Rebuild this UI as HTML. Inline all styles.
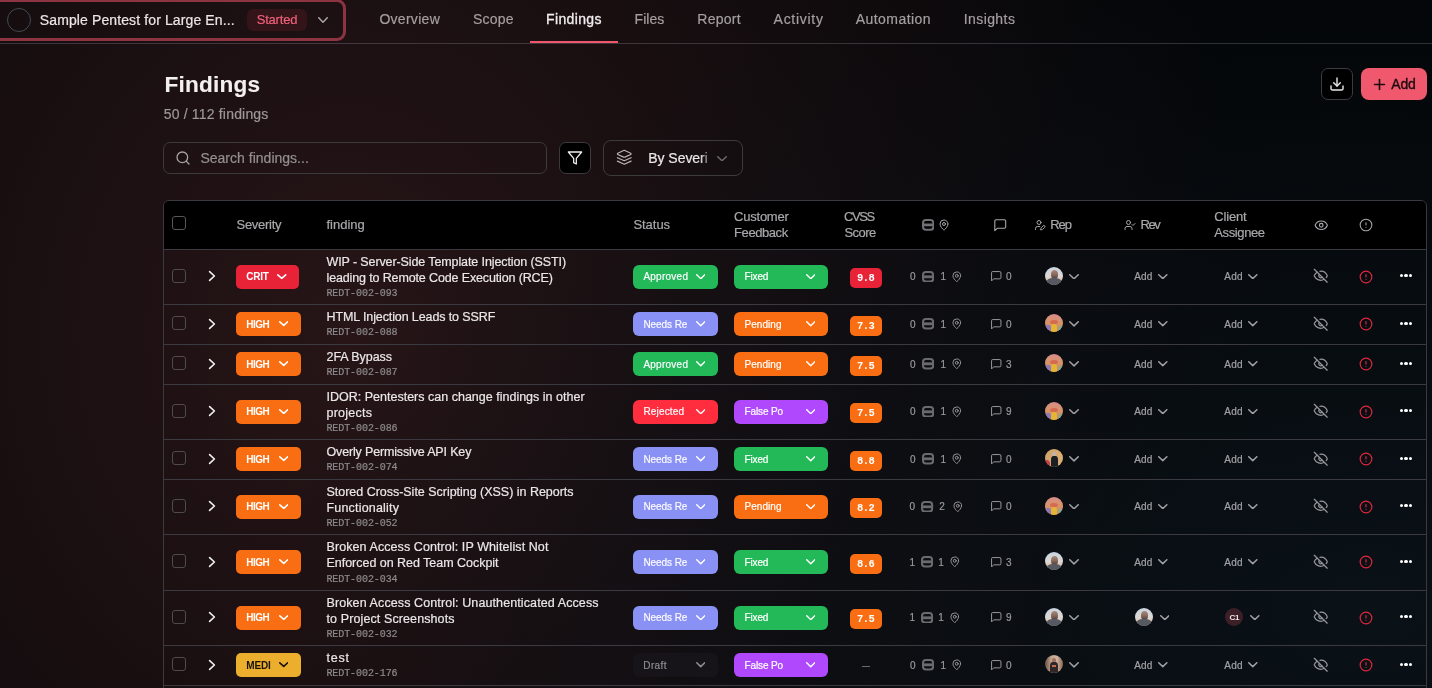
<!DOCTYPE html>
<html><head><meta charset="utf-8"><title>Findings</title>
<style>
html,body{margin:0;padding:0;}
body{width:1432px;height:688px;overflow:hidden;position:relative;font-family:'Liberation Sans', sans-serif;
background:
 radial-gradient(1092px 699px at 1368px 610px, rgba(10,17,23,1), rgba(10,17,23,0)),
 radial-gradient(898px 1027px at 347px 335px, rgba(39,21,23,1), rgba(39,21,23,0)),
 #030507;
}
#root{position:absolute;left:0;top:0;width:1432px;height:688px;will-change:transform;}
</style></head><body><div id="root">
<div style="position:absolute;left:-12px;top:-1px;width:358px;height:42px;box-sizing:border-box;border:3px solid #8c3442;border-radius:9px;"></div>
<div style="position:absolute;left:7px;top:8px;width:24px;height:24px;box-sizing:border-box;border:1.3px solid #444a51;border-radius:50%;"></div>
<div style="position:absolute;left:39.8px;top:13.23px;font-family:'Liberation Sans', sans-serif;font-size:14px;line-height:15.64px;color:#ece6e8;font-weight:400;letter-spacing:0.114px;white-space:nowrap;-webkit-text-stroke:0.2px currentColor;">Sample Pentest for Large En...</div>
<div style="position:absolute;left:247px;top:9px;width:60px;height:22px;box-sizing:border-box;background:#321419;border-radius:6px;"></div>
<div style="position:absolute;left:256.7px;top:13.13px;font-family:'Liberation Sans', sans-serif;font-size:13px;line-height:14.52px;color:#f0607a;font-weight:400;letter-spacing:-0.2px;white-space:nowrap;-webkit-text-stroke:0.2px currentColor;">Started</div>
<svg style="position:absolute;left:318px;top:17px" width="10" height="6" viewBox="0 0 10 6" fill="none" stroke="#a9a3a5" stroke-width="1.5" stroke-linecap="round" stroke-linejoin="round"><path d="M0.75 0.75 L5.0 5.25 L9.25 0.75"/></svg>
<div style="position:absolute;left:0px;top:43px;width:1432px;height:1px;box-sizing:border-box;background:rgba(235,235,255,0.185);"></div>
<div style="position:absolute;left:379.4px;top:12.23px;font-family:'Liberation Sans', sans-serif;font-size:14px;line-height:15.64px;color:#a59fa1;font-weight:400;letter-spacing:0.286px;white-space:nowrap;-webkit-text-stroke:0.2px currentColor;">Overview</div>
<div style="position:absolute;left:473px;top:12.23px;font-family:'Liberation Sans', sans-serif;font-size:14px;line-height:15.64px;color:#a59fa1;font-weight:400;letter-spacing:0.188px;white-space:nowrap;-webkit-text-stroke:0.2px currentColor;">Scope</div>
<div style="position:absolute;left:546px;top:12.23px;font-family:'Liberation Sans', sans-serif;font-size:14px;line-height:15.64px;color:#f2eef0;font-weight:400;letter-spacing:0.357px;white-space:nowrap;-webkit-text-stroke:0.3px #f2eef0;">Findings</div>
<div style="position:absolute;left:634.6px;top:12.23px;font-family:'Liberation Sans', sans-serif;font-size:14px;line-height:15.64px;color:#a59fa1;font-weight:400;letter-spacing:0.025px;white-space:nowrap;-webkit-text-stroke:0.2px currentColor;">Files</div>
<div style="position:absolute;left:697.3px;top:12.23px;font-family:'Liberation Sans', sans-serif;font-size:14px;line-height:15.64px;color:#a59fa1;font-weight:400;letter-spacing:0.27px;white-space:nowrap;-webkit-text-stroke:0.2px currentColor;">Report</div>
<div style="position:absolute;left:773.6px;top:12.23px;font-family:'Liberation Sans', sans-serif;font-size:14px;line-height:15.64px;color:#a59fa1;font-weight:400;letter-spacing:0.707px;white-space:nowrap;-webkit-text-stroke:0.2px currentColor;">Activity</div>
<div style="position:absolute;left:855.7px;top:12.23px;font-family:'Liberation Sans', sans-serif;font-size:14px;line-height:15.64px;color:#a59fa1;font-weight:400;letter-spacing:0.461px;white-space:nowrap;-webkit-text-stroke:0.2px currentColor;">Automation</div>
<div style="position:absolute;left:963.7px;top:12.23px;font-family:'Liberation Sans', sans-serif;font-size:14px;line-height:15.64px;color:#a59fa1;font-weight:400;letter-spacing:0.421px;white-space:nowrap;-webkit-text-stroke:0.2px currentColor;">Insights</div>
<div style="position:absolute;left:530px;top:41px;width:88px;height:2px;box-sizing:border-box;background:#f0566e;"></div>
<div style="position:absolute;left:164.5px;top:71.95px;font-family:'Liberation Sans', sans-serif;font-size:22.6px;line-height:25.24px;color:#f4f0f2;font-weight:700;letter-spacing:0.207px;white-space:nowrap;-webkit-text-stroke:0.1px #f4f0f2;">Findings</div>
<div style="position:absolute;left:163.7px;top:107.23px;font-family:'Liberation Sans', sans-serif;font-size:14px;line-height:15.64px;color:#9d9799;font-weight:400;letter-spacing:0.184px;white-space:nowrap;-webkit-text-stroke:0.2px currentColor;">50 / 112 findings</div>
<div style="position:absolute;left:1321px;top:68px;width:32px;height:32px;box-sizing:border-box;background:#000;border:1px solid #3b3b40;border-radius:7px;"></div>
<svg style="position:absolute;left:1329px;top:75.5px;" width="16" height="16" viewBox="0 0 24 24" fill="none" stroke="#e8e8e8" stroke-width="2.1" stroke-linecap="round" stroke-linejoin="round"><path d="M21 15v4a2 2 0 0 1-2 2H5a2 2 0 0 1-2-2v-4"/><polyline points="7 10 12 15 17 10"/><line x1="12" y1="15" x2="12" y2="3"/></svg>
<div style="position:absolute;left:1361px;top:68px;width:66px;height:32px;box-sizing:border-box;background:#f0586e;border-radius:8px;"></div>
<svg style="position:absolute;left:1370.5px;top:75.5px;" width="17" height="17" viewBox="0 0 24 24" fill="none" stroke="#1c0a0f" stroke-width="2.3" stroke-linecap="round" stroke-linejoin="round"><path d="M5 12h14"/><path d="M12 5v14"/></svg>
<div style="position:absolute;left:1391.3px;top:77.23px;font-family:'Liberation Sans', sans-serif;font-size:14px;line-height:15.64px;color:#1c0a0f;font-weight:400;letter-spacing:-0.15px;white-space:nowrap;-webkit-text-stroke:0.35px #1c0a0f;">Add</div>
<div style="position:absolute;left:163px;top:142px;width:384px;height:32px;box-sizing:border-box;border:1px solid #3d3a3e;border-radius:7px;"></div>
<svg style="position:absolute;left:174.8px;top:149.6px;" width="16" height="16" viewBox="0 0 24 24" fill="none" stroke="#a9a4a6" stroke-width="1.9" stroke-linecap="round" stroke-linejoin="round"><circle cx="11" cy="11" r="8"/><path d="m21 21-4.3-4.3"/></svg>
<div style="position:absolute;left:200.4px;top:151.23px;font-family:'Liberation Sans', sans-serif;font-size:14px;line-height:15.64px;color:#948f91;font-weight:400;letter-spacing:0.015px;white-space:nowrap;-webkit-text-stroke:0.2px currentColor;">Search findings...</div>
<div style="position:absolute;left:559px;top:142px;width:32px;height:32px;box-sizing:border-box;background:#000;border:1px solid #3b393d;border-radius:7px;"></div>
<svg style="position:absolute;left:566.8px;top:149.5px;" width="16" height="16" viewBox="0 0 24 24" fill="none" stroke="#f0f0f0" stroke-width="1.9" stroke-linecap="round" stroke-linejoin="round"><polygon points="22 3 2 3 10 12.46 10 19 14 21 14 12.46 22 3"/></svg>
<div style="position:absolute;left:603px;top:140px;width:140px;height:36px;box-sizing:border-box;border:1px solid #3d3a3e;border-radius:8px;"></div>
<svg style="position:absolute;left:615.8px;top:149.3px;" width="16.5" height="16.5" viewBox="0 0 24 24" fill="none" stroke="#b9b5b7" stroke-width="1.7" stroke-linecap="round" stroke-linejoin="round"><path d="m12.83 2.18a2 2 0 0 0-1.66 0L2.6 6.08a1 1 0 0 0 0 1.83l8.58 3.91a2 2 0 0 0 1.66 0l8.58-3.9a1 1 0 0 0 0-1.83Z"/><path d="m22 17.65-9.17 4.16a2 2 0 0 1-1.66 0L2 17.65"/><path d="m22 12.65-9.17 4.16a2 2 0 0 1-1.66 0L2 12.65"/></svg>
<div style="position:absolute;left:648.3px;top:151.23px;width:58.5px;overflow:hidden;font-family:'Liberation Sans', sans-serif;font-size:14px;line-height:15.64px;color:#ebe7e9;white-space:nowrap;letter-spacing:-0.05px;-webkit-text-stroke:0.2px #ebe7e9;-webkit-mask-image:linear-gradient(90deg,#000 88%,rgba(0,0,0,0.5))">By Severity</div>
<svg style="position:absolute;left:717px;top:155.5px" width="10" height="5.5" viewBox="0 0 10 5.5" fill="none" stroke="#6f6a6c" stroke-width="1.4" stroke-linecap="round" stroke-linejoin="round"><path d="M0.7 0.7 L5.0 4.8 L9.3 0.7"/></svg>
<div style="position:absolute;left:163px;top:200px;width:1264px;height:520px;box-sizing:border-box;border:1px solid #3a3a40;border-radius:6px;overflow:hidden;"></div>
<div style="position:absolute;left:164px;top:201px;width:1262px;height:48px;box-sizing:border-box;background:#000;border-radius:5px 5px 0 0;"></div>
<div style="position:absolute;left:164px;top:249px;width:1262px;height:1px;box-sizing:border-box;background:#3a3a40;"></div>
<div style="position:absolute;left:164px;top:304px;width:1262px;height:1px;box-sizing:border-box;background:#3a3a40;"></div>
<div style="position:absolute;left:164px;top:344px;width:1262px;height:1px;box-sizing:border-box;background:#3a3a40;"></div>
<div style="position:absolute;left:164px;top:384px;width:1262px;height:1px;box-sizing:border-box;background:#3a3a40;"></div>
<div style="position:absolute;left:164px;top:439px;width:1262px;height:1px;box-sizing:border-box;background:#3a3a40;"></div>
<div style="position:absolute;left:164px;top:479px;width:1262px;height:1px;box-sizing:border-box;background:#3a3a40;"></div>
<div style="position:absolute;left:164px;top:534px;width:1262px;height:1px;box-sizing:border-box;background:#3a3a40;"></div>
<div style="position:absolute;left:164px;top:590px;width:1262px;height:1px;box-sizing:border-box;background:#3a3a40;"></div>
<div style="position:absolute;left:164px;top:645px;width:1262px;height:1px;box-sizing:border-box;background:#3a3a40;"></div>
<div style="position:absolute;left:164px;top:685px;width:1262px;height:1px;box-sizing:border-box;background:#3a3a40;"></div>
<div style="position:absolute;left:172px;top:216px;width:14px;height:14px;box-sizing:border-box;border:1px solid #56565b;border-radius:3px;"></div>
<div style="position:absolute;left:236.5px;top:218.14px;font-family:'Liberation Sans', sans-serif;font-size:13px;line-height:14.52px;color:#a8a8ac;font-weight:400;letter-spacing:-0.271px;white-space:nowrap;-webkit-text-stroke:0.2px currentColor;">Severity</div>
<div style="position:absolute;left:326.5px;top:218.14px;font-family:'Liberation Sans', sans-serif;font-size:13px;line-height:14.52px;color:#a8a8ac;font-weight:400;letter-spacing:-0.008px;white-space:nowrap;-webkit-text-stroke:0.2px currentColor;">finding</div>
<div style="position:absolute;left:633.4px;top:218.14px;font-family:'Liberation Sans', sans-serif;font-size:13px;line-height:14.52px;color:#a8a8ac;font-weight:400;letter-spacing:-0.03px;white-space:nowrap;-webkit-text-stroke:0.2px currentColor;">Status</div>
<div style="position:absolute;left:734.1px;top:210.14px;font-family:'Liberation Sans', sans-serif;font-size:13px;line-height:14.52px;color:#a8a8ac;font-weight:400;letter-spacing:-0.236px;white-space:nowrap;-webkit-text-stroke:0.2px currentColor;">Customer</div>
<div style="position:absolute;left:734.1px;top:226.14px;font-family:'Liberation Sans', sans-serif;font-size:13px;line-height:14.52px;color:#a8a8ac;font-weight:400;letter-spacing:-0.436px;white-space:nowrap;-webkit-text-stroke:0.2px currentColor;">Feedback</div>
<div style="position:absolute;left:844px;top:210.14px;font-family:'Liberation Sans', sans-serif;font-size:13px;line-height:14.52px;color:#a8a8ac;font-weight:400;letter-spacing:-1.4px;white-space:nowrap;-webkit-text-stroke:0.2px currentColor;">CVSS</div>
<div style="position:absolute;left:844.4px;top:226.14px;font-family:'Liberation Sans', sans-serif;font-size:13px;line-height:14.52px;color:#a8a8ac;font-weight:400;letter-spacing:-0.525px;white-space:nowrap;-webkit-text-stroke:0.2px currentColor;">Score</div>
<svg style="position:absolute;left:921.8px;top:218.8px" width="12.4" height="11.8" viewBox="0 0 12.4 11.8"><rect x="1" y="1" width="10.4" height="9.8" rx="3" fill="none" stroke="#717175" stroke-width="2"/><rect x="1" y="4.5" width="10.4" height="2.8" fill="#717175"/></svg>
<svg style="position:absolute;left:938px;top:219px;" width="12" height="12" viewBox="0 0 24 24" fill="none" stroke="#a8a8ac" stroke-width="2" stroke-linecap="round" stroke-linejoin="round"><path d="M20 10c0 4.993-5.539 10.193-7.399 11.799a1 1 0 0 1-1.202 0C9.539 20.193 4 14.993 4 10a8 8 0 0 1 16 0"/><circle cx="12" cy="10" r="3"/></svg>
<svg style="position:absolute;left:993.2px;top:218px;" width="14.5" height="14.5" viewBox="0 0 24 24" fill="none" stroke="#a8a8ac" stroke-width="1.8" stroke-linecap="round" stroke-linejoin="round"><path d="M21 15a2 2 0 0 1-2 2H7l-4 4V5a2 2 0 0 1 2-2h14a2 2 0 0 1 2 2z"/></svg>
<svg style="position:absolute;left:1033.8px;top:219px;" width="12" height="12" viewBox="0 0 24 24" fill="none" stroke="#a8a8ac" stroke-width="2" stroke-linecap="round" stroke-linejoin="round"><path d="M11.5 15H7a4 4 0 0 0-4 4v2"/><path d="M21.378 16.626a1 1 0 0 0-3.004-3.004l-4.01 4.012a2 2 0 0 0-.506.854l-.837 2.87a.5.5 0 0 0 .62.62l2.87-.837a2 2 0 0 0 .854-.506z"/><circle cx="10" cy="7" r="4"/></svg>
<div style="position:absolute;left:1050.3px;top:218.14px;font-family:'Liberation Sans', sans-serif;font-size:13px;line-height:14.52px;color:#a8a8ac;font-weight:400;letter-spacing:-1.125px;white-space:nowrap;-webkit-text-stroke:0.2px currentColor;">Rep</div>
<svg style="position:absolute;left:1123.5px;top:219px;" width="12" height="12" viewBox="0 0 24 24" fill="none" stroke="#a8a8ac" stroke-width="2" stroke-linecap="round" stroke-linejoin="round"><path d="M16 21v-2a4 4 0 0 0-4-4H6a4 4 0 0 0-4 4v2"/><circle cx="9" cy="7" r="4"/><polyline points="16 11 18 13 22 9"/></svg>
<div style="position:absolute;left:1140.4px;top:218.14px;font-family:'Liberation Sans', sans-serif;font-size:13px;line-height:14.52px;color:#a8a8ac;font-weight:400;letter-spacing:-1.35px;white-space:nowrap;-webkit-text-stroke:0.2px currentColor;">Rev</div>
<div style="position:absolute;left:1214.3px;top:210.14px;font-family:'Liberation Sans', sans-serif;font-size:13px;line-height:14.52px;color:#a8a8ac;font-weight:400;letter-spacing:-0.19px;white-space:nowrap;-webkit-text-stroke:0.2px currentColor;">Client</div>
<div style="position:absolute;left:1214.3px;top:226.14px;font-family:'Liberation Sans', sans-serif;font-size:13px;line-height:14.52px;color:#a8a8ac;font-weight:400;letter-spacing:-0.386px;white-space:nowrap;-webkit-text-stroke:0.2px currentColor;">Assignee</div>
<svg style="position:absolute;left:1313.6px;top:217.6px;" width="14.5" height="14.5" viewBox="0 0 24 24" fill="none" stroke="#a8a8ac" stroke-width="1.9" stroke-linecap="round" stroke-linejoin="round"><path d="M2.062 12.348a1 1 0 0 1 0-.696 10.75 10.75 0 0 1 19.876 0 1 1 0 0 1 0 .696 10.75 10.75 0 0 1-19.876 0"/><circle cx="12" cy="12" r="3"/></svg>
<svg style="position:absolute;left:1359px;top:218px;" width="14" height="14" viewBox="0 0 24 24" fill="none" stroke="#a8a8ac" stroke-width="1.8" stroke-linecap="round" stroke-linejoin="round"><circle cx="12" cy="12" r="10"/><line x1="12" x2="12" y1="8" y2="12"/><line x1="12" x2="12.01" y1="16" y2="16"/></svg>
<div style="position:absolute;left:172px;top:268.9px;width:14px;height:14px;box-sizing:border-box;border:1px solid #4d4b50;border-radius:3px;"></div>
<svg style="position:absolute;left:207px;top:269.25px" width="10" height="14" viewBox="0 0 10 14" fill="none" stroke="#f2f2f2" stroke-width="1.6" stroke-linecap="round" stroke-linejoin="round"><path d="M2.6 2.6 L7.4 7 L2.6 11.4"/></svg>
<div style="position:absolute;left:236px;top:264.5px;width:63px;height:24px;box-sizing:border-box;background:#e82337;border-radius:5px;"></div>
<div style="position:absolute;left:246.3px;top:271.45px;font-family:'Liberation Sans', sans-serif;font-size:10px;line-height:11.17px;color:#fff;font-weight:700;letter-spacing:-0.217px;white-space:nowrap;">CRIT</div>
<svg style="position:absolute;left:277px;top:273.9px" width="9.5" height="5.2" viewBox="0 0 9.5 5.2" fill="none" stroke="#fff" stroke-width="1.6" stroke-linecap="round" stroke-linejoin="round"><path d="M0.8 0.8 L4.75 4.4 L8.7 0.8"/></svg>
<div style="position:absolute;left:326.5px;top:255.79px;font-family:'Liberation Sans', sans-serif;font-size:12.5px;line-height:13.96px;color:#ebe7e9;font-weight:400;letter-spacing:-0.107px;white-space:nowrap;-webkit-text-stroke:0.2px currentColor;">WIP - Server-Side Template Injection (SSTI)</div>
<div style="position:absolute;left:326.5px;top:271.79px;font-family:'Liberation Sans', sans-serif;font-size:12.5px;line-height:13.96px;color:#ebe7e9;font-weight:400;letter-spacing:-0.135px;white-space:nowrap;-webkit-text-stroke:0.2px currentColor;">leading to Remote Code Execution (RCE)</div>
<div style="position:absolute;left:326.4px;top:288.07px;font-family:'Liberation Mono', monospace;font-size:10px;line-height:11.33px;color:#8d8a8c;font-weight:400;letter-spacing:-0.073px;white-space:nowrap;-webkit-text-stroke:0.2px currentColor;">REDT-002-093</div>
<div style="position:absolute;left:633px;top:264.5px;width:85px;height:24px;box-sizing:border-box;background:#24b958;border-radius:6px;"></div>
<div style="position:absolute;left:643.4px;top:271.35px;font-family:'Liberation Sans', sans-serif;font-size:10px;line-height:11.17px;color:#fafaff;font-weight:400;letter-spacing:0.25px;white-space:nowrap;-webkit-text-stroke:0.2px currentColor;">Approved</div>
<svg style="position:absolute;left:695.5px;top:273.9px" width="9.5" height="5.4" viewBox="0 0 9.5 5.4" fill="none" stroke="#fff" stroke-width="1.45" stroke-linecap="round" stroke-linejoin="round"><path d="M0.725 0.725 L4.75 4.675000000000001 L8.775 0.725"/></svg>
<div style="position:absolute;left:734px;top:264.5px;width:94px;height:24px;box-sizing:border-box;background:#24b958;border-radius:6px;"></div>
<div style="position:absolute;left:744.5px;top:271.35px;font-family:'Liberation Sans', sans-serif;font-size:10px;line-height:11.17px;color:#fff;font-weight:400;letter-spacing:-0.15px;white-space:nowrap;-webkit-text-stroke:0.2px currentColor;">Fixed</div>
<svg style="position:absolute;left:805.5px;top:273.9px" width="9.5" height="5.4" viewBox="0 0 9.5 5.4" fill="none" stroke="#fff" stroke-width="1.45" stroke-linecap="round" stroke-linejoin="round"><path d="M0.725 0.725 L4.75 4.675000000000001 L8.775 0.725"/></svg>
<div style="position:absolute;left:850px;top:268.0px;width:32px;height:20px;box-sizing:border-box;background:#e82337;border-radius:5px;"></div>
<div style="position:absolute;left:857px;top:273.15px;font-family:'Liberation Mono', monospace;font-size:10.5px;line-height:11.90px;color:#fff;font-weight:700;letter-spacing:-0.6px;white-space:nowrap;">9.8</div>
<div style="position:absolute;left:910px;top:271.35px;font-family:'Liberation Sans', sans-serif;font-size:10px;line-height:11.17px;color:#9a989b;font-weight:400;letter-spacing:0.2px;white-space:nowrap;-webkit-text-stroke:0.2px currentColor;">0</div>
<svg style="position:absolute;left:921.8px;top:270.7px" width="12.2" height="11.6" viewBox="0 0 12.2 11.6"><rect x="1" y="1" width="10.2" height="9.6" rx="3" fill="none" stroke="#6b6b6f" stroke-width="2"/><rect x="1" y="4.4" width="10.2" height="2.8" fill="#6b6b6f"/></svg>
<div style="position:absolute;left:940.5px;top:271.35px;font-family:'Liberation Sans', sans-serif;font-size:10px;line-height:11.17px;color:#9a989b;font-weight:400;letter-spacing:0.2px;white-space:nowrap;-webkit-text-stroke:0.2px currentColor;">1</div>
<svg style="position:absolute;left:950.5px;top:270.7px;" width="11.5" height="11.5" viewBox="0 0 24 24" fill="none" stroke="#9a989b" stroke-width="2" stroke-linecap="round" stroke-linejoin="round"><path d="M20 10c0 4.993-5.539 10.193-7.399 11.799a1 1 0 0 1-1.202 0C9.539 20.193 4 14.993 4 10a8 8 0 0 1 16 0"/><circle cx="12" cy="10" r="3"/></svg>
<svg style="position:absolute;left:989.6px;top:270.1px;" width="12.5" height="12.5" viewBox="0 0 24 24" fill="none" stroke="#9a989b" stroke-width="1.9" stroke-linecap="round" stroke-linejoin="round"><path d="M21 15a2 2 0 0 1-2 2H7l-4 4V5a2 2 0 0 1 2-2h14a2 2 0 0 1 2 2z"/></svg>
<div style="position:absolute;left:1006px;top:271.35px;font-family:'Liberation Sans', sans-serif;font-size:10px;line-height:11.17px;color:#9a989b;font-weight:400;letter-spacing:0.2px;white-space:nowrap;-webkit-text-stroke:0.2px currentColor;">0</div>
<div style="position:absolute;left:1045px;top:266.9px;width:18px;height:18px;border-radius:50%;overflow:hidden"><div style="position:absolute;left:0;top:0;width:18px;height:18px;background:linear-gradient(#c8d4e0 0%, #dcd8d4 55%, #d8c0ac 72%, #b0a090 100%)"></div><div style="position:absolute;left:5.6px;top:3.4px;width:7px;height:9px;border-radius:50% 50% 45% 45%;background:linear-gradient(#a88a7a, #8a6a5c 50%, #4e3e3a 100%)"></div><div style="position:absolute;left:1px;top:11.6px;width:16px;height:10px;border-radius:45% 45% 0 0;background:#565962"></div></div>
<svg style="position:absolute;left:1069px;top:273.5px" width="10" height="5.6" viewBox="0 0 10 5.6" fill="none" stroke="#a0a0a4" stroke-width="1.5" stroke-linecap="round" stroke-linejoin="round"><path d="M0.75 0.75 L5.0 4.85 L9.25 0.75"/></svg>
<div style="position:absolute;left:1134.3px;top:271.35px;font-family:'Liberation Sans', sans-serif;font-size:10px;line-height:11.17px;color:#a2a2a6;font-weight:400;letter-spacing:0.125px;white-space:nowrap;-webkit-text-stroke:0.2px currentColor;">Add</div>
<svg style="position:absolute;left:1158.4px;top:273.9px" width="9.6" height="5.4" viewBox="0 0 9.6 5.4" fill="none" stroke="#a0a0a4" stroke-width="1.5" stroke-linecap="round" stroke-linejoin="round"><path d="M0.75 0.75 L4.8 4.65 L8.85 0.75"/></svg>
<div style="position:absolute;left:1224.2px;top:271.35px;font-family:'Liberation Sans', sans-serif;font-size:10px;line-height:11.17px;color:#a2a2a6;font-weight:400;letter-spacing:0.325px;white-space:nowrap;-webkit-text-stroke:0.2px currentColor;">Add</div>
<svg style="position:absolute;left:1248.3px;top:273.9px" width="9.6" height="5.4" viewBox="0 0 9.6 5.4" fill="none" stroke="#a0a0a4" stroke-width="1.5" stroke-linecap="round" stroke-linejoin="round"><path d="M0.75 0.75 L4.8 4.65 L8.85 0.75"/></svg>
<svg style="position:absolute;left:1313.2px;top:268.0px;" width="15.5" height="15.5" viewBox="0 0 24 24" fill="none" stroke="#97979b" stroke-width="1.9" stroke-linecap="round" stroke-linejoin="round"><path d="M10.733 5.076a10.744 10.744 0 0 1 11.205 6.575 1 1 0 0 1 0 .696 10.747 10.747 0 0 1-1.444 2.49"/><path d="M14.084 14.158a3 3 0 0 1-4.242-4.242"/><path d="M17.479 17.499a10.75 10.75 0 0 1-15.417-5.151 1 1 0 0 1 0-.696 10.75 10.75 0 0 1 4.446-5.143"/><path d="m2 2 20 20"/></svg>
<svg style="position:absolute;left:1359px;top:269.7px;" width="14" height="14" viewBox="0 0 24 24" fill="none" stroke="#e0283c" stroke-width="2" stroke-linecap="round" stroke-linejoin="round"><circle cx="12" cy="12" r="10"/><line x1="12" x2="12" y1="8" y2="12"/><line x1="12" x2="12.01" y1="16" y2="16"/></svg>
<div style="position:absolute;left:1399.7px;top:274.2px;width:3.1px;height:3.1px;box-sizing:border-box;background:#fff;border-radius:50%;"></div>
<div style="position:absolute;left:1404.45px;top:274.2px;width:3.1px;height:3.1px;box-sizing:border-box;background:#fff;border-radius:50%;"></div>
<div style="position:absolute;left:1409.2px;top:274.2px;width:3.1px;height:3.1px;box-sizing:border-box;background:#fff;border-radius:50%;"></div>
<div style="position:absolute;left:172px;top:316.4px;width:14px;height:14px;box-sizing:border-box;border:1px solid #4d4b50;border-radius:3px;"></div>
<svg style="position:absolute;left:207px;top:316.75px" width="10" height="14" viewBox="0 0 10 14" fill="none" stroke="#f2f2f2" stroke-width="1.6" stroke-linecap="round" stroke-linejoin="round"><path d="M2.6 2.6 L7.4 7 L2.6 11.4"/></svg>
<div style="position:absolute;left:236px;top:312.0px;width:65px;height:24px;box-sizing:border-box;background:#f96e12;border-radius:5px;"></div>
<div style="position:absolute;left:246.3px;top:318.95px;font-family:'Liberation Sans', sans-serif;font-size:10px;line-height:11.17px;color:#fff;font-weight:700;letter-spacing:-0.5px;white-space:nowrap;">HIGH</div>
<svg style="position:absolute;left:278.5px;top:321.4px" width="9.5" height="5.2" viewBox="0 0 9.5 5.2" fill="none" stroke="#fff" stroke-width="1.6" stroke-linecap="round" stroke-linejoin="round"><path d="M0.8 0.8 L4.75 4.4 L8.7 0.8"/></svg>
<div style="position:absolute;left:326.5px;top:311.29px;font-family:'Liberation Sans', sans-serif;font-size:12.5px;line-height:13.96px;color:#ebe7e9;font-weight:400;letter-spacing:-0.113px;white-space:nowrap;-webkit-text-stroke:0.2px currentColor;">HTML Injection Leads to SSRF</div>
<div style="position:absolute;left:326.4px;top:326.57px;font-family:'Liberation Mono', monospace;font-size:10px;line-height:11.33px;color:#8d8a8c;font-weight:400;letter-spacing:-0.073px;white-space:nowrap;-webkit-text-stroke:0.2px currentColor;">REDT-002-088</div>
<div style="position:absolute;left:633px;top:312.0px;width:85px;height:24px;box-sizing:border-box;background:#8a91f4;border-radius:6px;"></div>
<div style="position:absolute;left:643.4px;top:318.85px;font-family:'Liberation Sans', sans-serif;font-size:10px;line-height:11.17px;color:#fafaff;font-weight:400;letter-spacing:-0.071px;white-space:nowrap;-webkit-text-stroke:0.2px currentColor;">Needs Re</div>
<svg style="position:absolute;left:695.5px;top:321.4px" width="9.5" height="5.4" viewBox="0 0 9.5 5.4" fill="none" stroke="#fff" stroke-width="1.45" stroke-linecap="round" stroke-linejoin="round"><path d="M0.725 0.725 L4.75 4.675000000000001 L8.775 0.725"/></svg>
<div style="position:absolute;left:734px;top:312.0px;width:94px;height:24px;box-sizing:border-box;background:#f96e12;border-radius:6px;"></div>
<div style="position:absolute;left:744.5px;top:318.85px;font-family:'Liberation Sans', sans-serif;font-size:10px;line-height:11.17px;color:#fff;font-weight:400;letter-spacing:0.042px;white-space:nowrap;-webkit-text-stroke:0.2px currentColor;">Pending</div>
<svg style="position:absolute;left:805.5px;top:321.4px" width="9.5" height="5.4" viewBox="0 0 9.5 5.4" fill="none" stroke="#fff" stroke-width="1.45" stroke-linecap="round" stroke-linejoin="round"><path d="M0.725 0.725 L4.75 4.675000000000001 L8.775 0.725"/></svg>
<div style="position:absolute;left:850px;top:315.5px;width:32px;height:20px;box-sizing:border-box;background:#f96e12;border-radius:5px;"></div>
<div style="position:absolute;left:857px;top:320.65px;font-family:'Liberation Mono', monospace;font-size:10.5px;line-height:11.90px;color:#fff;font-weight:700;letter-spacing:-0.6px;white-space:nowrap;">7.3</div>
<div style="position:absolute;left:910px;top:318.85px;font-family:'Liberation Sans', sans-serif;font-size:10px;line-height:11.17px;color:#9a989b;font-weight:400;letter-spacing:0.2px;white-space:nowrap;-webkit-text-stroke:0.2px currentColor;">0</div>
<svg style="position:absolute;left:921.8px;top:318.2px" width="12.2" height="11.6" viewBox="0 0 12.2 11.6"><rect x="1" y="1" width="10.2" height="9.6" rx="3" fill="none" stroke="#6b6b6f" stroke-width="2"/><rect x="1" y="4.4" width="10.2" height="2.8" fill="#6b6b6f"/></svg>
<div style="position:absolute;left:940.5px;top:318.85px;font-family:'Liberation Sans', sans-serif;font-size:10px;line-height:11.17px;color:#9a989b;font-weight:400;letter-spacing:0.2px;white-space:nowrap;-webkit-text-stroke:0.2px currentColor;">1</div>
<svg style="position:absolute;left:950.5px;top:318.2px;" width="11.5" height="11.5" viewBox="0 0 24 24" fill="none" stroke="#9a989b" stroke-width="2" stroke-linecap="round" stroke-linejoin="round"><path d="M20 10c0 4.993-5.539 10.193-7.399 11.799a1 1 0 0 1-1.202 0C9.539 20.193 4 14.993 4 10a8 8 0 0 1 16 0"/><circle cx="12" cy="10" r="3"/></svg>
<svg style="position:absolute;left:989.6px;top:317.6px;" width="12.5" height="12.5" viewBox="0 0 24 24" fill="none" stroke="#9a989b" stroke-width="1.9" stroke-linecap="round" stroke-linejoin="round"><path d="M21 15a2 2 0 0 1-2 2H7l-4 4V5a2 2 0 0 1 2-2h14a2 2 0 0 1 2 2z"/></svg>
<div style="position:absolute;left:1006px;top:318.85px;font-family:'Liberation Sans', sans-serif;font-size:10px;line-height:11.17px;color:#9a989b;font-weight:400;letter-spacing:0.2px;white-space:nowrap;-webkit-text-stroke:0.2px currentColor;">0</div>
<div style="position:absolute;left:1045px;top:314.4px;width:18px;height:18px;border-radius:50%;overflow:hidden"><div style="position:absolute;left:0;top:0;width:18px;height:18px;background:linear-gradient(#d88c8c 0%, #d89468 45%, #cc8a5c 100%)"></div><div style="position:absolute;left:0px;top:11px;width:6px;height:8px;background:#9078b8;border-radius:40%;filter:blur(0.6px)"></div><div style="position:absolute;left:12.5px;top:12px;width:5px;height:6px;background:#88a890;border-radius:40%;filter:blur(0.6px)"></div><div style="position:absolute;left:5px;top:6px;width:8px;height:4px;background:#d46a50;border-radius:50%;filter:blur(0.6px)"></div><div style="position:absolute;left:6px;top:10px;width:6px;height:9px;background:#e4b434;border-radius:40% 40% 0 0;filter:blur(0.4px)"></div></div>
<svg style="position:absolute;left:1069px;top:321.0px" width="10" height="5.6" viewBox="0 0 10 5.6" fill="none" stroke="#a0a0a4" stroke-width="1.5" stroke-linecap="round" stroke-linejoin="round"><path d="M0.75 0.75 L5.0 4.85 L9.25 0.75"/></svg>
<div style="position:absolute;left:1134.3px;top:318.85px;font-family:'Liberation Sans', sans-serif;font-size:10px;line-height:11.17px;color:#a2a2a6;font-weight:400;letter-spacing:0.125px;white-space:nowrap;-webkit-text-stroke:0.2px currentColor;">Add</div>
<svg style="position:absolute;left:1158.4px;top:321.4px" width="9.6" height="5.4" viewBox="0 0 9.6 5.4" fill="none" stroke="#a0a0a4" stroke-width="1.5" stroke-linecap="round" stroke-linejoin="round"><path d="M0.75 0.75 L4.8 4.65 L8.85 0.75"/></svg>
<div style="position:absolute;left:1224.2px;top:318.85px;font-family:'Liberation Sans', sans-serif;font-size:10px;line-height:11.17px;color:#a2a2a6;font-weight:400;letter-spacing:0.325px;white-space:nowrap;-webkit-text-stroke:0.2px currentColor;">Add</div>
<svg style="position:absolute;left:1248.3px;top:321.4px" width="9.6" height="5.4" viewBox="0 0 9.6 5.4" fill="none" stroke="#a0a0a4" stroke-width="1.5" stroke-linecap="round" stroke-linejoin="round"><path d="M0.75 0.75 L4.8 4.65 L8.85 0.75"/></svg>
<svg style="position:absolute;left:1313.2px;top:315.5px;" width="15.5" height="15.5" viewBox="0 0 24 24" fill="none" stroke="#97979b" stroke-width="1.9" stroke-linecap="round" stroke-linejoin="round"><path d="M10.733 5.076a10.744 10.744 0 0 1 11.205 6.575 1 1 0 0 1 0 .696 10.747 10.747 0 0 1-1.444 2.49"/><path d="M14.084 14.158a3 3 0 0 1-4.242-4.242"/><path d="M17.479 17.499a10.75 10.75 0 0 1-15.417-5.151 1 1 0 0 1 0-.696 10.75 10.75 0 0 1 4.446-5.143"/><path d="m2 2 20 20"/></svg>
<svg style="position:absolute;left:1359px;top:317.2px;" width="14" height="14" viewBox="0 0 24 24" fill="none" stroke="#e0283c" stroke-width="2" stroke-linecap="round" stroke-linejoin="round"><circle cx="12" cy="12" r="10"/><line x1="12" x2="12" y1="8" y2="12"/><line x1="12" x2="12.01" y1="16" y2="16"/></svg>
<div style="position:absolute;left:1399.7px;top:321.7px;width:3.1px;height:3.1px;box-sizing:border-box;background:#fff;border-radius:50%;"></div>
<div style="position:absolute;left:1404.45px;top:321.7px;width:3.1px;height:3.1px;box-sizing:border-box;background:#fff;border-radius:50%;"></div>
<div style="position:absolute;left:1409.2px;top:321.7px;width:3.1px;height:3.1px;box-sizing:border-box;background:#fff;border-radius:50%;"></div>
<div style="position:absolute;left:172px;top:356.4px;width:14px;height:14px;box-sizing:border-box;border:1px solid #4d4b50;border-radius:3px;"></div>
<svg style="position:absolute;left:207px;top:356.75px" width="10" height="14" viewBox="0 0 10 14" fill="none" stroke="#f2f2f2" stroke-width="1.6" stroke-linecap="round" stroke-linejoin="round"><path d="M2.6 2.6 L7.4 7 L2.6 11.4"/></svg>
<div style="position:absolute;left:236px;top:352.0px;width:65px;height:24px;box-sizing:border-box;background:#f96e12;border-radius:5px;"></div>
<div style="position:absolute;left:246.3px;top:358.95px;font-family:'Liberation Sans', sans-serif;font-size:10px;line-height:11.17px;color:#fff;font-weight:700;letter-spacing:-0.5px;white-space:nowrap;">HIGH</div>
<svg style="position:absolute;left:278.5px;top:361.4px" width="9.5" height="5.2" viewBox="0 0 9.5 5.2" fill="none" stroke="#fff" stroke-width="1.6" stroke-linecap="round" stroke-linejoin="round"><path d="M0.8 0.8 L4.75 4.4 L8.7 0.8"/></svg>
<div style="position:absolute;left:326.5px;top:351.29px;font-family:'Liberation Sans', sans-serif;font-size:12.5px;line-height:13.96px;color:#ebe7e9;font-weight:400;letter-spacing:-0.056px;white-space:nowrap;-webkit-text-stroke:0.2px currentColor;">2FA Bypass</div>
<div style="position:absolute;left:326.4px;top:366.57px;font-family:'Liberation Mono', monospace;font-size:10px;line-height:11.33px;color:#8d8a8c;font-weight:400;letter-spacing:-0.073px;white-space:nowrap;-webkit-text-stroke:0.2px currentColor;">REDT-002-087</div>
<div style="position:absolute;left:633px;top:352.0px;width:85px;height:24px;box-sizing:border-box;background:#24b958;border-radius:6px;"></div>
<div style="position:absolute;left:643.4px;top:358.85px;font-family:'Liberation Sans', sans-serif;font-size:10px;line-height:11.17px;color:#fafaff;font-weight:400;letter-spacing:0.25px;white-space:nowrap;-webkit-text-stroke:0.2px currentColor;">Approved</div>
<svg style="position:absolute;left:695.5px;top:361.4px" width="9.5" height="5.4" viewBox="0 0 9.5 5.4" fill="none" stroke="#fff" stroke-width="1.45" stroke-linecap="round" stroke-linejoin="round"><path d="M0.725 0.725 L4.75 4.675000000000001 L8.775 0.725"/></svg>
<div style="position:absolute;left:734px;top:352.0px;width:94px;height:24px;box-sizing:border-box;background:#f96e12;border-radius:6px;"></div>
<div style="position:absolute;left:744.5px;top:358.85px;font-family:'Liberation Sans', sans-serif;font-size:10px;line-height:11.17px;color:#fff;font-weight:400;letter-spacing:0.042px;white-space:nowrap;-webkit-text-stroke:0.2px currentColor;">Pending</div>
<svg style="position:absolute;left:805.5px;top:361.4px" width="9.5" height="5.4" viewBox="0 0 9.5 5.4" fill="none" stroke="#fff" stroke-width="1.45" stroke-linecap="round" stroke-linejoin="round"><path d="M0.725 0.725 L4.75 4.675000000000001 L8.775 0.725"/></svg>
<div style="position:absolute;left:850px;top:355.5px;width:32px;height:20px;box-sizing:border-box;background:#f96e12;border-radius:5px;"></div>
<div style="position:absolute;left:857px;top:360.65px;font-family:'Liberation Mono', monospace;font-size:10.5px;line-height:11.90px;color:#fff;font-weight:700;letter-spacing:-0.6px;white-space:nowrap;">7.5</div>
<div style="position:absolute;left:910px;top:358.85px;font-family:'Liberation Sans', sans-serif;font-size:10px;line-height:11.17px;color:#9a989b;font-weight:400;letter-spacing:0.2px;white-space:nowrap;-webkit-text-stroke:0.2px currentColor;">0</div>
<svg style="position:absolute;left:921.8px;top:358.2px" width="12.2" height="11.6" viewBox="0 0 12.2 11.6"><rect x="1" y="1" width="10.2" height="9.6" rx="3" fill="none" stroke="#6b6b6f" stroke-width="2"/><rect x="1" y="4.4" width="10.2" height="2.8" fill="#6b6b6f"/></svg>
<div style="position:absolute;left:940.5px;top:358.85px;font-family:'Liberation Sans', sans-serif;font-size:10px;line-height:11.17px;color:#9a989b;font-weight:400;letter-spacing:0.2px;white-space:nowrap;-webkit-text-stroke:0.2px currentColor;">1</div>
<svg style="position:absolute;left:950.5px;top:358.2px;" width="11.5" height="11.5" viewBox="0 0 24 24" fill="none" stroke="#9a989b" stroke-width="2" stroke-linecap="round" stroke-linejoin="round"><path d="M20 10c0 4.993-5.539 10.193-7.399 11.799a1 1 0 0 1-1.202 0C9.539 20.193 4 14.993 4 10a8 8 0 0 1 16 0"/><circle cx="12" cy="10" r="3"/></svg>
<svg style="position:absolute;left:989.6px;top:357.6px;" width="12.5" height="12.5" viewBox="0 0 24 24" fill="none" stroke="#9a989b" stroke-width="1.9" stroke-linecap="round" stroke-linejoin="round"><path d="M21 15a2 2 0 0 1-2 2H7l-4 4V5a2 2 0 0 1 2-2h14a2 2 0 0 1 2 2z"/></svg>
<div style="position:absolute;left:1006px;top:358.85px;font-family:'Liberation Sans', sans-serif;font-size:10px;line-height:11.17px;color:#9a989b;font-weight:400;letter-spacing:0.2px;white-space:nowrap;-webkit-text-stroke:0.2px currentColor;">3</div>
<div style="position:absolute;left:1045px;top:354.4px;width:18px;height:18px;border-radius:50%;overflow:hidden"><div style="position:absolute;left:0;top:0;width:18px;height:18px;background:linear-gradient(#d88c8c 0%, #d89468 45%, #cc8a5c 100%)"></div><div style="position:absolute;left:0px;top:11px;width:6px;height:8px;background:#9078b8;border-radius:40%;filter:blur(0.6px)"></div><div style="position:absolute;left:12.5px;top:12px;width:5px;height:6px;background:#88a890;border-radius:40%;filter:blur(0.6px)"></div><div style="position:absolute;left:5px;top:6px;width:8px;height:4px;background:#d46a50;border-radius:50%;filter:blur(0.6px)"></div><div style="position:absolute;left:6px;top:10px;width:6px;height:9px;background:#e4b434;border-radius:40% 40% 0 0;filter:blur(0.4px)"></div></div>
<svg style="position:absolute;left:1069px;top:361.0px" width="10" height="5.6" viewBox="0 0 10 5.6" fill="none" stroke="#a0a0a4" stroke-width="1.5" stroke-linecap="round" stroke-linejoin="round"><path d="M0.75 0.75 L5.0 4.85 L9.25 0.75"/></svg>
<div style="position:absolute;left:1134.3px;top:358.85px;font-family:'Liberation Sans', sans-serif;font-size:10px;line-height:11.17px;color:#a2a2a6;font-weight:400;letter-spacing:0.125px;white-space:nowrap;-webkit-text-stroke:0.2px currentColor;">Add</div>
<svg style="position:absolute;left:1158.4px;top:361.4px" width="9.6" height="5.4" viewBox="0 0 9.6 5.4" fill="none" stroke="#a0a0a4" stroke-width="1.5" stroke-linecap="round" stroke-linejoin="round"><path d="M0.75 0.75 L4.8 4.65 L8.85 0.75"/></svg>
<div style="position:absolute;left:1224.2px;top:358.85px;font-family:'Liberation Sans', sans-serif;font-size:10px;line-height:11.17px;color:#a2a2a6;font-weight:400;letter-spacing:0.325px;white-space:nowrap;-webkit-text-stroke:0.2px currentColor;">Add</div>
<svg style="position:absolute;left:1248.3px;top:361.4px" width="9.6" height="5.4" viewBox="0 0 9.6 5.4" fill="none" stroke="#a0a0a4" stroke-width="1.5" stroke-linecap="round" stroke-linejoin="round"><path d="M0.75 0.75 L4.8 4.65 L8.85 0.75"/></svg>
<svg style="position:absolute;left:1313.2px;top:355.5px;" width="15.5" height="15.5" viewBox="0 0 24 24" fill="none" stroke="#97979b" stroke-width="1.9" stroke-linecap="round" stroke-linejoin="round"><path d="M10.733 5.076a10.744 10.744 0 0 1 11.205 6.575 1 1 0 0 1 0 .696 10.747 10.747 0 0 1-1.444 2.49"/><path d="M14.084 14.158a3 3 0 0 1-4.242-4.242"/><path d="M17.479 17.499a10.75 10.75 0 0 1-15.417-5.151 1 1 0 0 1 0-.696 10.75 10.75 0 0 1 4.446-5.143"/><path d="m2 2 20 20"/></svg>
<svg style="position:absolute;left:1359px;top:357.2px;" width="14" height="14" viewBox="0 0 24 24" fill="none" stroke="#e0283c" stroke-width="2" stroke-linecap="round" stroke-linejoin="round"><circle cx="12" cy="12" r="10"/><line x1="12" x2="12" y1="8" y2="12"/><line x1="12" x2="12.01" y1="16" y2="16"/></svg>
<div style="position:absolute;left:1399.7px;top:361.7px;width:3.1px;height:3.1px;box-sizing:border-box;background:#fff;border-radius:50%;"></div>
<div style="position:absolute;left:1404.45px;top:361.7px;width:3.1px;height:3.1px;box-sizing:border-box;background:#fff;border-radius:50%;"></div>
<div style="position:absolute;left:1409.2px;top:361.7px;width:3.1px;height:3.1px;box-sizing:border-box;background:#fff;border-radius:50%;"></div>
<div style="position:absolute;left:172px;top:403.9px;width:14px;height:14px;box-sizing:border-box;border:1px solid #4d4b50;border-radius:3px;"></div>
<svg style="position:absolute;left:207px;top:404.25px" width="10" height="14" viewBox="0 0 10 14" fill="none" stroke="#f2f2f2" stroke-width="1.6" stroke-linecap="round" stroke-linejoin="round"><path d="M2.6 2.6 L7.4 7 L2.6 11.4"/></svg>
<div style="position:absolute;left:236px;top:399.5px;width:65px;height:24px;box-sizing:border-box;background:#f96e12;border-radius:5px;"></div>
<div style="position:absolute;left:246.3px;top:406.45px;font-family:'Liberation Sans', sans-serif;font-size:10px;line-height:11.17px;color:#fff;font-weight:700;letter-spacing:-0.5px;white-space:nowrap;">HIGH</div>
<svg style="position:absolute;left:278.5px;top:408.9px" width="9.5" height="5.2" viewBox="0 0 9.5 5.2" fill="none" stroke="#fff" stroke-width="1.6" stroke-linecap="round" stroke-linejoin="round"><path d="M0.8 0.8 L4.75 4.4 L8.7 0.8"/></svg>
<div style="position:absolute;left:326.5px;top:390.79px;font-family:'Liberation Sans', sans-serif;font-size:12.5px;line-height:13.96px;color:#ebe7e9;font-weight:400;letter-spacing:0.006px;white-space:nowrap;-webkit-text-stroke:0.2px currentColor;">IDOR: Pentesters can change findings in other</div>
<div style="position:absolute;left:326.5px;top:406.79px;font-family:'Liberation Sans', sans-serif;font-size:12.5px;line-height:13.96px;color:#ebe7e9;font-weight:400;letter-spacing:0.25px;white-space:nowrap;-webkit-text-stroke:0.2px currentColor;">projects</div>
<div style="position:absolute;left:326.4px;top:423.07px;font-family:'Liberation Mono', monospace;font-size:10px;line-height:11.33px;color:#8d8a8c;font-weight:400;letter-spacing:-0.073px;white-space:nowrap;-webkit-text-stroke:0.2px currentColor;">REDT-002-086</div>
<div style="position:absolute;left:633px;top:399.5px;width:85px;height:24px;box-sizing:border-box;background:#ff2d3e;border-radius:6px;"></div>
<div style="position:absolute;left:643.4px;top:406.35px;font-family:'Liberation Sans', sans-serif;font-size:10px;line-height:11.17px;color:#fafaff;font-weight:400;letter-spacing:0.171px;white-space:nowrap;-webkit-text-stroke:0.2px currentColor;">Rejected</div>
<svg style="position:absolute;left:695.5px;top:408.9px" width="9.5" height="5.4" viewBox="0 0 9.5 5.4" fill="none" stroke="#fff" stroke-width="1.45" stroke-linecap="round" stroke-linejoin="round"><path d="M0.725 0.725 L4.75 4.675000000000001 L8.775 0.725"/></svg>
<div style="position:absolute;left:734px;top:399.5px;width:94px;height:24px;box-sizing:border-box;background:#b049fd;border-radius:6px;"></div>
<div style="position:absolute;left:744.5px;top:406.35px;font-family:'Liberation Sans', sans-serif;font-size:10px;line-height:11.17px;color:#fff;font-weight:400;letter-spacing:-0.114px;white-space:nowrap;-webkit-text-stroke:0.2px currentColor;">False Po</div>
<svg style="position:absolute;left:805.5px;top:408.9px" width="9.5" height="5.4" viewBox="0 0 9.5 5.4" fill="none" stroke="#fff" stroke-width="1.45" stroke-linecap="round" stroke-linejoin="round"><path d="M0.725 0.725 L4.75 4.675000000000001 L8.775 0.725"/></svg>
<div style="position:absolute;left:850px;top:403.0px;width:32px;height:20px;box-sizing:border-box;background:#f96e12;border-radius:5px;"></div>
<div style="position:absolute;left:857px;top:408.15px;font-family:'Liberation Mono', monospace;font-size:10.5px;line-height:11.90px;color:#fff;font-weight:700;letter-spacing:-0.6px;white-space:nowrap;">7.5</div>
<div style="position:absolute;left:910px;top:406.35px;font-family:'Liberation Sans', sans-serif;font-size:10px;line-height:11.17px;color:#9a989b;font-weight:400;letter-spacing:0.2px;white-space:nowrap;-webkit-text-stroke:0.2px currentColor;">0</div>
<svg style="position:absolute;left:921.8px;top:405.7px" width="12.2" height="11.6" viewBox="0 0 12.2 11.6"><rect x="1" y="1" width="10.2" height="9.6" rx="3" fill="none" stroke="#6b6b6f" stroke-width="2"/><rect x="1" y="4.4" width="10.2" height="2.8" fill="#6b6b6f"/></svg>
<div style="position:absolute;left:940.5px;top:406.35px;font-family:'Liberation Sans', sans-serif;font-size:10px;line-height:11.17px;color:#9a989b;font-weight:400;letter-spacing:0.2px;white-space:nowrap;-webkit-text-stroke:0.2px currentColor;">1</div>
<svg style="position:absolute;left:950.5px;top:405.7px;" width="11.5" height="11.5" viewBox="0 0 24 24" fill="none" stroke="#9a989b" stroke-width="2" stroke-linecap="round" stroke-linejoin="round"><path d="M20 10c0 4.993-5.539 10.193-7.399 11.799a1 1 0 0 1-1.202 0C9.539 20.193 4 14.993 4 10a8 8 0 0 1 16 0"/><circle cx="12" cy="10" r="3"/></svg>
<svg style="position:absolute;left:989.6px;top:405.1px;" width="12.5" height="12.5" viewBox="0 0 24 24" fill="none" stroke="#9a989b" stroke-width="1.9" stroke-linecap="round" stroke-linejoin="round"><path d="M21 15a2 2 0 0 1-2 2H7l-4 4V5a2 2 0 0 1 2-2h14a2 2 0 0 1 2 2z"/></svg>
<div style="position:absolute;left:1006px;top:406.35px;font-family:'Liberation Sans', sans-serif;font-size:10px;line-height:11.17px;color:#9a989b;font-weight:400;letter-spacing:0.2px;white-space:nowrap;-webkit-text-stroke:0.2px currentColor;">9</div>
<div style="position:absolute;left:1045px;top:401.9px;width:18px;height:18px;border-radius:50%;overflow:hidden"><div style="position:absolute;left:0;top:0;width:18px;height:18px;background:linear-gradient(#d88c8c 0%, #d89468 45%, #cc8a5c 100%)"></div><div style="position:absolute;left:0px;top:11px;width:6px;height:8px;background:#9078b8;border-radius:40%;filter:blur(0.6px)"></div><div style="position:absolute;left:12.5px;top:12px;width:5px;height:6px;background:#88a890;border-radius:40%;filter:blur(0.6px)"></div><div style="position:absolute;left:5px;top:6px;width:8px;height:4px;background:#d46a50;border-radius:50%;filter:blur(0.6px)"></div><div style="position:absolute;left:6px;top:10px;width:6px;height:9px;background:#e4b434;border-radius:40% 40% 0 0;filter:blur(0.4px)"></div></div>
<svg style="position:absolute;left:1069px;top:408.5px" width="10" height="5.6" viewBox="0 0 10 5.6" fill="none" stroke="#a0a0a4" stroke-width="1.5" stroke-linecap="round" stroke-linejoin="round"><path d="M0.75 0.75 L5.0 4.85 L9.25 0.75"/></svg>
<div style="position:absolute;left:1134.3px;top:406.35px;font-family:'Liberation Sans', sans-serif;font-size:10px;line-height:11.17px;color:#a2a2a6;font-weight:400;letter-spacing:0.125px;white-space:nowrap;-webkit-text-stroke:0.2px currentColor;">Add</div>
<svg style="position:absolute;left:1158.4px;top:408.9px" width="9.6" height="5.4" viewBox="0 0 9.6 5.4" fill="none" stroke="#a0a0a4" stroke-width="1.5" stroke-linecap="round" stroke-linejoin="round"><path d="M0.75 0.75 L4.8 4.65 L8.85 0.75"/></svg>
<div style="position:absolute;left:1224.2px;top:406.35px;font-family:'Liberation Sans', sans-serif;font-size:10px;line-height:11.17px;color:#a2a2a6;font-weight:400;letter-spacing:0.325px;white-space:nowrap;-webkit-text-stroke:0.2px currentColor;">Add</div>
<svg style="position:absolute;left:1248.3px;top:408.9px" width="9.6" height="5.4" viewBox="0 0 9.6 5.4" fill="none" stroke="#a0a0a4" stroke-width="1.5" stroke-linecap="round" stroke-linejoin="round"><path d="M0.75 0.75 L4.8 4.65 L8.85 0.75"/></svg>
<svg style="position:absolute;left:1313.2px;top:403.0px;" width="15.5" height="15.5" viewBox="0 0 24 24" fill="none" stroke="#97979b" stroke-width="1.9" stroke-linecap="round" stroke-linejoin="round"><path d="M10.733 5.076a10.744 10.744 0 0 1 11.205 6.575 1 1 0 0 1 0 .696 10.747 10.747 0 0 1-1.444 2.49"/><path d="M14.084 14.158a3 3 0 0 1-4.242-4.242"/><path d="M17.479 17.499a10.75 10.75 0 0 1-15.417-5.151 1 1 0 0 1 0-.696 10.75 10.75 0 0 1 4.446-5.143"/><path d="m2 2 20 20"/></svg>
<svg style="position:absolute;left:1359px;top:404.7px;" width="14" height="14" viewBox="0 0 24 24" fill="none" stroke="#e0283c" stroke-width="2" stroke-linecap="round" stroke-linejoin="round"><circle cx="12" cy="12" r="10"/><line x1="12" x2="12" y1="8" y2="12"/><line x1="12" x2="12.01" y1="16" y2="16"/></svg>
<div style="position:absolute;left:1399.7px;top:409.2px;width:3.1px;height:3.1px;box-sizing:border-box;background:#fff;border-radius:50%;"></div>
<div style="position:absolute;left:1404.45px;top:409.2px;width:3.1px;height:3.1px;box-sizing:border-box;background:#fff;border-radius:50%;"></div>
<div style="position:absolute;left:1409.2px;top:409.2px;width:3.1px;height:3.1px;box-sizing:border-box;background:#fff;border-radius:50%;"></div>
<div style="position:absolute;left:172px;top:451.4px;width:14px;height:14px;box-sizing:border-box;border:1px solid #4d4b50;border-radius:3px;"></div>
<svg style="position:absolute;left:207px;top:451.75px" width="10" height="14" viewBox="0 0 10 14" fill="none" stroke="#f2f2f2" stroke-width="1.6" stroke-linecap="round" stroke-linejoin="round"><path d="M2.6 2.6 L7.4 7 L2.6 11.4"/></svg>
<div style="position:absolute;left:236px;top:447.0px;width:65px;height:24px;box-sizing:border-box;background:#f96e12;border-radius:5px;"></div>
<div style="position:absolute;left:246.3px;top:453.95px;font-family:'Liberation Sans', sans-serif;font-size:10px;line-height:11.17px;color:#fff;font-weight:700;letter-spacing:-0.5px;white-space:nowrap;">HIGH</div>
<svg style="position:absolute;left:278.5px;top:456.4px" width="9.5" height="5.2" viewBox="0 0 9.5 5.2" fill="none" stroke="#fff" stroke-width="1.6" stroke-linecap="round" stroke-linejoin="round"><path d="M0.8 0.8 L4.75 4.4 L8.7 0.8"/></svg>
<div style="position:absolute;left:326.5px;top:446.29px;font-family:'Liberation Sans', sans-serif;font-size:12.5px;line-height:13.96px;color:#ebe7e9;font-weight:400;letter-spacing:-0.156px;white-space:nowrap;-webkit-text-stroke:0.2px currentColor;">Overly Permissive API Key</div>
<div style="position:absolute;left:326.4px;top:461.57px;font-family:'Liberation Mono', monospace;font-size:10px;line-height:11.33px;color:#8d8a8c;font-weight:400;letter-spacing:-0.073px;white-space:nowrap;-webkit-text-stroke:0.2px currentColor;">REDT-002-074</div>
<div style="position:absolute;left:633px;top:447.0px;width:85px;height:24px;box-sizing:border-box;background:#8a91f4;border-radius:6px;"></div>
<div style="position:absolute;left:643.4px;top:453.85px;font-family:'Liberation Sans', sans-serif;font-size:10px;line-height:11.17px;color:#fafaff;font-weight:400;letter-spacing:-0.071px;white-space:nowrap;-webkit-text-stroke:0.2px currentColor;">Needs Re</div>
<svg style="position:absolute;left:695.5px;top:456.4px" width="9.5" height="5.4" viewBox="0 0 9.5 5.4" fill="none" stroke="#fff" stroke-width="1.45" stroke-linecap="round" stroke-linejoin="round"><path d="M0.725 0.725 L4.75 4.675000000000001 L8.775 0.725"/></svg>
<div style="position:absolute;left:734px;top:447.0px;width:94px;height:24px;box-sizing:border-box;background:#24b958;border-radius:6px;"></div>
<div style="position:absolute;left:744.5px;top:453.85px;font-family:'Liberation Sans', sans-serif;font-size:10px;line-height:11.17px;color:#fff;font-weight:400;letter-spacing:-0.15px;white-space:nowrap;-webkit-text-stroke:0.2px currentColor;">Fixed</div>
<svg style="position:absolute;left:805.5px;top:456.4px" width="9.5" height="5.4" viewBox="0 0 9.5 5.4" fill="none" stroke="#fff" stroke-width="1.45" stroke-linecap="round" stroke-linejoin="round"><path d="M0.725 0.725 L4.75 4.675000000000001 L8.775 0.725"/></svg>
<div style="position:absolute;left:850px;top:450.5px;width:32px;height:20px;box-sizing:border-box;background:#f96e12;border-radius:5px;"></div>
<div style="position:absolute;left:857px;top:455.65px;font-family:'Liberation Mono', monospace;font-size:10.5px;line-height:11.90px;color:#fff;font-weight:700;letter-spacing:-0.6px;white-space:nowrap;">8.8</div>
<div style="position:absolute;left:910px;top:453.85px;font-family:'Liberation Sans', sans-serif;font-size:10px;line-height:11.17px;color:#9a989b;font-weight:400;letter-spacing:0.2px;white-space:nowrap;-webkit-text-stroke:0.2px currentColor;">0</div>
<svg style="position:absolute;left:921.8px;top:453.2px" width="12.2" height="11.6" viewBox="0 0 12.2 11.6"><rect x="1" y="1" width="10.2" height="9.6" rx="3" fill="none" stroke="#6b6b6f" stroke-width="2"/><rect x="1" y="4.4" width="10.2" height="2.8" fill="#6b6b6f"/></svg>
<div style="position:absolute;left:940.5px;top:453.85px;font-family:'Liberation Sans', sans-serif;font-size:10px;line-height:11.17px;color:#9a989b;font-weight:400;letter-spacing:0.2px;white-space:nowrap;-webkit-text-stroke:0.2px currentColor;">1</div>
<svg style="position:absolute;left:950.5px;top:453.2px;" width="11.5" height="11.5" viewBox="0 0 24 24" fill="none" stroke="#9a989b" stroke-width="2" stroke-linecap="round" stroke-linejoin="round"><path d="M20 10c0 4.993-5.539 10.193-7.399 11.799a1 1 0 0 1-1.202 0C9.539 20.193 4 14.993 4 10a8 8 0 0 1 16 0"/><circle cx="12" cy="10" r="3"/></svg>
<svg style="position:absolute;left:989.6px;top:452.6px;" width="12.5" height="12.5" viewBox="0 0 24 24" fill="none" stroke="#9a989b" stroke-width="1.9" stroke-linecap="round" stroke-linejoin="round"><path d="M21 15a2 2 0 0 1-2 2H7l-4 4V5a2 2 0 0 1 2-2h14a2 2 0 0 1 2 2z"/></svg>
<div style="position:absolute;left:1006px;top:453.85px;font-family:'Liberation Sans', sans-serif;font-size:10px;line-height:11.17px;color:#9a989b;font-weight:400;letter-spacing:0.2px;white-space:nowrap;-webkit-text-stroke:0.2px currentColor;">0</div>
<div style="position:absolute;left:1045px;top:449.4px;width:18px;height:18px;border-radius:50%;overflow:hidden"><div style="position:absolute;left:0;top:0;width:18px;height:18px;background:linear-gradient(90deg, #d0a468, #dcb076)"></div><div style="position:absolute;left:-2px;top:11px;width:7px;height:8px;background:#c83a4c;border-radius:50%"></div><div style="position:absolute;left:7.4px;top:3px;width:3.4px;height:4px;background:#c0b4b0;border-radius:50%"></div><div style="position:absolute;left:5.5px;top:6.6px;width:7px;height:12px;background:#1c1e26;border-radius:35% 35% 0 0"></div></div>
<svg style="position:absolute;left:1069px;top:456.0px" width="10" height="5.6" viewBox="0 0 10 5.6" fill="none" stroke="#a0a0a4" stroke-width="1.5" stroke-linecap="round" stroke-linejoin="round"><path d="M0.75 0.75 L5.0 4.85 L9.25 0.75"/></svg>
<div style="position:absolute;left:1134.3px;top:453.85px;font-family:'Liberation Sans', sans-serif;font-size:10px;line-height:11.17px;color:#a2a2a6;font-weight:400;letter-spacing:0.125px;white-space:nowrap;-webkit-text-stroke:0.2px currentColor;">Add</div>
<svg style="position:absolute;left:1158.4px;top:456.4px" width="9.6" height="5.4" viewBox="0 0 9.6 5.4" fill="none" stroke="#a0a0a4" stroke-width="1.5" stroke-linecap="round" stroke-linejoin="round"><path d="M0.75 0.75 L4.8 4.65 L8.85 0.75"/></svg>
<div style="position:absolute;left:1224.2px;top:453.85px;font-family:'Liberation Sans', sans-serif;font-size:10px;line-height:11.17px;color:#a2a2a6;font-weight:400;letter-spacing:0.325px;white-space:nowrap;-webkit-text-stroke:0.2px currentColor;">Add</div>
<svg style="position:absolute;left:1248.3px;top:456.4px" width="9.6" height="5.4" viewBox="0 0 9.6 5.4" fill="none" stroke="#a0a0a4" stroke-width="1.5" stroke-linecap="round" stroke-linejoin="round"><path d="M0.75 0.75 L4.8 4.65 L8.85 0.75"/></svg>
<svg style="position:absolute;left:1313.2px;top:450.5px;" width="15.5" height="15.5" viewBox="0 0 24 24" fill="none" stroke="#97979b" stroke-width="1.9" stroke-linecap="round" stroke-linejoin="round"><path d="M10.733 5.076a10.744 10.744 0 0 1 11.205 6.575 1 1 0 0 1 0 .696 10.747 10.747 0 0 1-1.444 2.49"/><path d="M14.084 14.158a3 3 0 0 1-4.242-4.242"/><path d="M17.479 17.499a10.75 10.75 0 0 1-15.417-5.151 1 1 0 0 1 0-.696 10.75 10.75 0 0 1 4.446-5.143"/><path d="m2 2 20 20"/></svg>
<svg style="position:absolute;left:1359px;top:452.2px;" width="14" height="14" viewBox="0 0 24 24" fill="none" stroke="#e0283c" stroke-width="2" stroke-linecap="round" stroke-linejoin="round"><circle cx="12" cy="12" r="10"/><line x1="12" x2="12" y1="8" y2="12"/><line x1="12" x2="12.01" y1="16" y2="16"/></svg>
<div style="position:absolute;left:1399.7px;top:456.7px;width:3.1px;height:3.1px;box-sizing:border-box;background:#fff;border-radius:50%;"></div>
<div style="position:absolute;left:1404.45px;top:456.7px;width:3.1px;height:3.1px;box-sizing:border-box;background:#fff;border-radius:50%;"></div>
<div style="position:absolute;left:1409.2px;top:456.7px;width:3.1px;height:3.1px;box-sizing:border-box;background:#fff;border-radius:50%;"></div>
<div style="position:absolute;left:172px;top:498.9px;width:14px;height:14px;box-sizing:border-box;border:1px solid #4d4b50;border-radius:3px;"></div>
<svg style="position:absolute;left:207px;top:499.25px" width="10" height="14" viewBox="0 0 10 14" fill="none" stroke="#f2f2f2" stroke-width="1.6" stroke-linecap="round" stroke-linejoin="round"><path d="M2.6 2.6 L7.4 7 L2.6 11.4"/></svg>
<div style="position:absolute;left:236px;top:494.5px;width:65px;height:24px;box-sizing:border-box;background:#f96e12;border-radius:5px;"></div>
<div style="position:absolute;left:246.3px;top:501.45px;font-family:'Liberation Sans', sans-serif;font-size:10px;line-height:11.17px;color:#fff;font-weight:700;letter-spacing:-0.5px;white-space:nowrap;">HIGH</div>
<svg style="position:absolute;left:278.5px;top:503.9px" width="9.5" height="5.2" viewBox="0 0 9.5 5.2" fill="none" stroke="#fff" stroke-width="1.6" stroke-linecap="round" stroke-linejoin="round"><path d="M0.8 0.8 L4.75 4.4 L8.7 0.8"/></svg>
<div style="position:absolute;left:326.5px;top:485.79px;font-family:'Liberation Sans', sans-serif;font-size:12.5px;line-height:13.96px;color:#ebe7e9;font-weight:400;letter-spacing:-0.023px;white-space:nowrap;-webkit-text-stroke:0.2px currentColor;">Stored Cross-Site Scripting (XSS) in Reports</div>
<div style="position:absolute;left:326.5px;top:501.79px;font-family:'Liberation Sans', sans-serif;font-size:12.5px;line-height:13.96px;color:#ebe7e9;font-weight:400;letter-spacing:0.188px;white-space:nowrap;-webkit-text-stroke:0.2px currentColor;">Functionality</div>
<div style="position:absolute;left:326.4px;top:518.07px;font-family:'Liberation Mono', monospace;font-size:10px;line-height:11.33px;color:#8d8a8c;font-weight:400;letter-spacing:-0.073px;white-space:nowrap;-webkit-text-stroke:0.2px currentColor;">REDT-002-052</div>
<div style="position:absolute;left:633px;top:494.5px;width:85px;height:24px;box-sizing:border-box;background:#8a91f4;border-radius:6px;"></div>
<div style="position:absolute;left:643.4px;top:501.35px;font-family:'Liberation Sans', sans-serif;font-size:10px;line-height:11.17px;color:#fafaff;font-weight:400;letter-spacing:-0.071px;white-space:nowrap;-webkit-text-stroke:0.2px currentColor;">Needs Re</div>
<svg style="position:absolute;left:695.5px;top:503.9px" width="9.5" height="5.4" viewBox="0 0 9.5 5.4" fill="none" stroke="#fff" stroke-width="1.45" stroke-linecap="round" stroke-linejoin="round"><path d="M0.725 0.725 L4.75 4.675000000000001 L8.775 0.725"/></svg>
<div style="position:absolute;left:734px;top:494.5px;width:94px;height:24px;box-sizing:border-box;background:#f96e12;border-radius:6px;"></div>
<div style="position:absolute;left:744.5px;top:501.35px;font-family:'Liberation Sans', sans-serif;font-size:10px;line-height:11.17px;color:#fff;font-weight:400;letter-spacing:0.042px;white-space:nowrap;-webkit-text-stroke:0.2px currentColor;">Pending</div>
<svg style="position:absolute;left:805.5px;top:503.9px" width="9.5" height="5.4" viewBox="0 0 9.5 5.4" fill="none" stroke="#fff" stroke-width="1.45" stroke-linecap="round" stroke-linejoin="round"><path d="M0.725 0.725 L4.75 4.675000000000001 L8.775 0.725"/></svg>
<div style="position:absolute;left:850px;top:498.0px;width:32px;height:20px;box-sizing:border-box;background:#f96e12;border-radius:5px;"></div>
<div style="position:absolute;left:857px;top:503.15px;font-family:'Liberation Mono', monospace;font-size:10.5px;line-height:11.90px;color:#fff;font-weight:700;letter-spacing:-0.6px;white-space:nowrap;">8.2</div>
<div style="position:absolute;left:909.4px;top:501.35px;font-family:'Liberation Sans', sans-serif;font-size:10px;line-height:11.17px;color:#9a989b;font-weight:400;letter-spacing:0.2px;white-space:nowrap;-webkit-text-stroke:0.2px currentColor;">0</div>
<svg style="position:absolute;left:921.4px;top:500.7px" width="12.2" height="11.6" viewBox="0 0 12.2 11.6"><rect x="1" y="1" width="10.2" height="9.6" rx="3" fill="none" stroke="#6b6b6f" stroke-width="2"/><rect x="1" y="4.4" width="10.2" height="2.8" fill="#6b6b6f"/></svg>
<div style="position:absolute;left:939.2px;top:501.35px;font-family:'Liberation Sans', sans-serif;font-size:10px;line-height:11.17px;color:#9a989b;font-weight:400;letter-spacing:0.2px;white-space:nowrap;-webkit-text-stroke:0.2px currentColor;">2</div>
<svg style="position:absolute;left:952.3px;top:500.7px;" width="11.5" height="11.5" viewBox="0 0 24 24" fill="none" stroke="#9a989b" stroke-width="2" stroke-linecap="round" stroke-linejoin="round"><path d="M20 10c0 4.993-5.539 10.193-7.399 11.799a1 1 0 0 1-1.202 0C9.539 20.193 4 14.993 4 10a8 8 0 0 1 16 0"/><circle cx="12" cy="10" r="3"/></svg>
<svg style="position:absolute;left:989.6px;top:500.1px;" width="12.5" height="12.5" viewBox="0 0 24 24" fill="none" stroke="#9a989b" stroke-width="1.9" stroke-linecap="round" stroke-linejoin="round"><path d="M21 15a2 2 0 0 1-2 2H7l-4 4V5a2 2 0 0 1 2-2h14a2 2 0 0 1 2 2z"/></svg>
<div style="position:absolute;left:1006px;top:501.35px;font-family:'Liberation Sans', sans-serif;font-size:10px;line-height:11.17px;color:#9a989b;font-weight:400;letter-spacing:0.2px;white-space:nowrap;-webkit-text-stroke:0.2px currentColor;">0</div>
<div style="position:absolute;left:1045px;top:496.9px;width:18px;height:18px;border-radius:50%;overflow:hidden"><div style="position:absolute;left:0;top:0;width:18px;height:18px;background:linear-gradient(#d88c8c 0%, #d89468 45%, #cc8a5c 100%)"></div><div style="position:absolute;left:0px;top:11px;width:6px;height:8px;background:#9078b8;border-radius:40%;filter:blur(0.6px)"></div><div style="position:absolute;left:12.5px;top:12px;width:5px;height:6px;background:#88a890;border-radius:40%;filter:blur(0.6px)"></div><div style="position:absolute;left:5px;top:6px;width:8px;height:4px;background:#d46a50;border-radius:50%;filter:blur(0.6px)"></div><div style="position:absolute;left:6px;top:10px;width:6px;height:9px;background:#e4b434;border-radius:40% 40% 0 0;filter:blur(0.4px)"></div></div>
<svg style="position:absolute;left:1069px;top:503.5px" width="10" height="5.6" viewBox="0 0 10 5.6" fill="none" stroke="#a0a0a4" stroke-width="1.5" stroke-linecap="round" stroke-linejoin="round"><path d="M0.75 0.75 L5.0 4.85 L9.25 0.75"/></svg>
<div style="position:absolute;left:1134.3px;top:501.35px;font-family:'Liberation Sans', sans-serif;font-size:10px;line-height:11.17px;color:#a2a2a6;font-weight:400;letter-spacing:0.125px;white-space:nowrap;-webkit-text-stroke:0.2px currentColor;">Add</div>
<svg style="position:absolute;left:1158.4px;top:503.9px" width="9.6" height="5.4" viewBox="0 0 9.6 5.4" fill="none" stroke="#a0a0a4" stroke-width="1.5" stroke-linecap="round" stroke-linejoin="round"><path d="M0.75 0.75 L4.8 4.65 L8.85 0.75"/></svg>
<div style="position:absolute;left:1224.2px;top:501.35px;font-family:'Liberation Sans', sans-serif;font-size:10px;line-height:11.17px;color:#a2a2a6;font-weight:400;letter-spacing:0.325px;white-space:nowrap;-webkit-text-stroke:0.2px currentColor;">Add</div>
<svg style="position:absolute;left:1248.3px;top:503.9px" width="9.6" height="5.4" viewBox="0 0 9.6 5.4" fill="none" stroke="#a0a0a4" stroke-width="1.5" stroke-linecap="round" stroke-linejoin="round"><path d="M0.75 0.75 L4.8 4.65 L8.85 0.75"/></svg>
<svg style="position:absolute;left:1313.2px;top:498.0px;" width="15.5" height="15.5" viewBox="0 0 24 24" fill="none" stroke="#97979b" stroke-width="1.9" stroke-linecap="round" stroke-linejoin="round"><path d="M10.733 5.076a10.744 10.744 0 0 1 11.205 6.575 1 1 0 0 1 0 .696 10.747 10.747 0 0 1-1.444 2.49"/><path d="M14.084 14.158a3 3 0 0 1-4.242-4.242"/><path d="M17.479 17.499a10.75 10.75 0 0 1-15.417-5.151 1 1 0 0 1 0-.696 10.75 10.75 0 0 1 4.446-5.143"/><path d="m2 2 20 20"/></svg>
<svg style="position:absolute;left:1359px;top:499.7px;" width="14" height="14" viewBox="0 0 24 24" fill="none" stroke="#e0283c" stroke-width="2" stroke-linecap="round" stroke-linejoin="round"><circle cx="12" cy="12" r="10"/><line x1="12" x2="12" y1="8" y2="12"/><line x1="12" x2="12.01" y1="16" y2="16"/></svg>
<div style="position:absolute;left:1399.7px;top:504.2px;width:3.1px;height:3.1px;box-sizing:border-box;background:#fff;border-radius:50%;"></div>
<div style="position:absolute;left:1404.45px;top:504.2px;width:3.1px;height:3.1px;box-sizing:border-box;background:#fff;border-radius:50%;"></div>
<div style="position:absolute;left:1409.2px;top:504.2px;width:3.1px;height:3.1px;box-sizing:border-box;background:#fff;border-radius:50%;"></div>
<div style="position:absolute;left:172px;top:554.4px;width:14px;height:14px;box-sizing:border-box;border:1px solid #4d4b50;border-radius:3px;"></div>
<svg style="position:absolute;left:207px;top:554.75px" width="10" height="14" viewBox="0 0 10 14" fill="none" stroke="#f2f2f2" stroke-width="1.6" stroke-linecap="round" stroke-linejoin="round"><path d="M2.6 2.6 L7.4 7 L2.6 11.4"/></svg>
<div style="position:absolute;left:236px;top:550.0px;width:65px;height:24px;box-sizing:border-box;background:#f96e12;border-radius:5px;"></div>
<div style="position:absolute;left:246.3px;top:556.95px;font-family:'Liberation Sans', sans-serif;font-size:10px;line-height:11.17px;color:#fff;font-weight:700;letter-spacing:-0.5px;white-space:nowrap;">HIGH</div>
<svg style="position:absolute;left:278.5px;top:559.4px" width="9.5" height="5.2" viewBox="0 0 9.5 5.2" fill="none" stroke="#fff" stroke-width="1.6" stroke-linecap="round" stroke-linejoin="round"><path d="M0.8 0.8 L4.75 4.4 L8.7 0.8"/></svg>
<div style="position:absolute;left:326.5px;top:541.29px;font-family:'Liberation Sans', sans-serif;font-size:12.5px;line-height:13.96px;color:#ebe7e9;font-weight:400;letter-spacing:0.086px;white-space:nowrap;-webkit-text-stroke:0.2px currentColor;">Broken Access Control: IP Whitelist Not</div>
<div style="position:absolute;left:326.5px;top:557.29px;font-family:'Liberation Sans', sans-serif;font-size:12.5px;line-height:13.96px;color:#ebe7e9;font-weight:400;letter-spacing:-0.028px;white-space:nowrap;-webkit-text-stroke:0.2px currentColor;">Enforced on Red Team Cockpit</div>
<div style="position:absolute;left:326.4px;top:573.57px;font-family:'Liberation Mono', monospace;font-size:10px;line-height:11.33px;color:#8d8a8c;font-weight:400;letter-spacing:-0.073px;white-space:nowrap;-webkit-text-stroke:0.2px currentColor;">REDT-002-034</div>
<div style="position:absolute;left:633px;top:550.0px;width:85px;height:24px;box-sizing:border-box;background:#8a91f4;border-radius:6px;"></div>
<div style="position:absolute;left:643.4px;top:556.85px;font-family:'Liberation Sans', sans-serif;font-size:10px;line-height:11.17px;color:#fafaff;font-weight:400;letter-spacing:-0.071px;white-space:nowrap;-webkit-text-stroke:0.2px currentColor;">Needs Re</div>
<svg style="position:absolute;left:695.5px;top:559.4px" width="9.5" height="5.4" viewBox="0 0 9.5 5.4" fill="none" stroke="#fff" stroke-width="1.45" stroke-linecap="round" stroke-linejoin="round"><path d="M0.725 0.725 L4.75 4.675000000000001 L8.775 0.725"/></svg>
<div style="position:absolute;left:734px;top:550.0px;width:94px;height:24px;box-sizing:border-box;background:#24b958;border-radius:6px;"></div>
<div style="position:absolute;left:744.5px;top:556.85px;font-family:'Liberation Sans', sans-serif;font-size:10px;line-height:11.17px;color:#fff;font-weight:400;letter-spacing:-0.15px;white-space:nowrap;-webkit-text-stroke:0.2px currentColor;">Fixed</div>
<svg style="position:absolute;left:805.5px;top:559.4px" width="9.5" height="5.4" viewBox="0 0 9.5 5.4" fill="none" stroke="#fff" stroke-width="1.45" stroke-linecap="round" stroke-linejoin="round"><path d="M0.725 0.725 L4.75 4.675000000000001 L8.775 0.725"/></svg>
<div style="position:absolute;left:850px;top:553.5px;width:32px;height:20px;box-sizing:border-box;background:#f96e12;border-radius:5px;"></div>
<div style="position:absolute;left:857px;top:558.65px;font-family:'Liberation Mono', monospace;font-size:10.5px;line-height:11.90px;color:#fff;font-weight:700;letter-spacing:-0.6px;white-space:nowrap;">8.6</div>
<div style="position:absolute;left:909.6px;top:556.85px;font-family:'Liberation Sans', sans-serif;font-size:10px;line-height:11.17px;color:#9a989b;font-weight:400;letter-spacing:0.2px;white-space:nowrap;-webkit-text-stroke:0.2px currentColor;">1</div>
<svg style="position:absolute;left:920.8px;top:556.2px" width="12.2" height="11.6" viewBox="0 0 12.2 11.6"><rect x="1" y="1" width="10.2" height="9.6" rx="3" fill="none" stroke="#6b6b6f" stroke-width="2"/><rect x="1" y="4.4" width="10.2" height="2.8" fill="#6b6b6f"/></svg>
<div style="position:absolute;left:938.3px;top:556.85px;font-family:'Liberation Sans', sans-serif;font-size:10px;line-height:11.17px;color:#9a989b;font-weight:400;letter-spacing:0.2px;white-space:nowrap;-webkit-text-stroke:0.2px currentColor;">1</div>
<svg style="position:absolute;left:949.4px;top:556.2px;" width="11.5" height="11.5" viewBox="0 0 24 24" fill="none" stroke="#9a989b" stroke-width="2" stroke-linecap="round" stroke-linejoin="round"><path d="M20 10c0 4.993-5.539 10.193-7.399 11.799a1 1 0 0 1-1.202 0C9.539 20.193 4 14.993 4 10a8 8 0 0 1 16 0"/><circle cx="12" cy="10" r="3"/></svg>
<svg style="position:absolute;left:989.6px;top:555.6px;" width="12.5" height="12.5" viewBox="0 0 24 24" fill="none" stroke="#9a989b" stroke-width="1.9" stroke-linecap="round" stroke-linejoin="round"><path d="M21 15a2 2 0 0 1-2 2H7l-4 4V5a2 2 0 0 1 2-2h14a2 2 0 0 1 2 2z"/></svg>
<div style="position:absolute;left:1006px;top:556.85px;font-family:'Liberation Sans', sans-serif;font-size:10px;line-height:11.17px;color:#9a989b;font-weight:400;letter-spacing:0.2px;white-space:nowrap;-webkit-text-stroke:0.2px currentColor;">3</div>
<div style="position:absolute;left:1045px;top:552.4px;width:18px;height:18px;border-radius:50%;overflow:hidden"><div style="position:absolute;left:0;top:0;width:18px;height:18px;background:linear-gradient(#c8d4e0 0%, #dcd8d4 55%, #d8c0ac 72%, #b0a090 100%)"></div><div style="position:absolute;left:5.6px;top:3.4px;width:7px;height:9px;border-radius:50% 50% 45% 45%;background:linear-gradient(#a88a7a, #8a6a5c 50%, #4e3e3a 100%)"></div><div style="position:absolute;left:1px;top:11.6px;width:16px;height:10px;border-radius:45% 45% 0 0;background:#565962"></div></div>
<svg style="position:absolute;left:1069px;top:559.0px" width="10" height="5.6" viewBox="0 0 10 5.6" fill="none" stroke="#a0a0a4" stroke-width="1.5" stroke-linecap="round" stroke-linejoin="round"><path d="M0.75 0.75 L5.0 4.85 L9.25 0.75"/></svg>
<div style="position:absolute;left:1134.3px;top:556.85px;font-family:'Liberation Sans', sans-serif;font-size:10px;line-height:11.17px;color:#a2a2a6;font-weight:400;letter-spacing:0.125px;white-space:nowrap;-webkit-text-stroke:0.2px currentColor;">Add</div>
<svg style="position:absolute;left:1158.4px;top:559.4px" width="9.6" height="5.4" viewBox="0 0 9.6 5.4" fill="none" stroke="#a0a0a4" stroke-width="1.5" stroke-linecap="round" stroke-linejoin="round"><path d="M0.75 0.75 L4.8 4.65 L8.85 0.75"/></svg>
<div style="position:absolute;left:1224.2px;top:556.85px;font-family:'Liberation Sans', sans-serif;font-size:10px;line-height:11.17px;color:#a2a2a6;font-weight:400;letter-spacing:0.325px;white-space:nowrap;-webkit-text-stroke:0.2px currentColor;">Add</div>
<svg style="position:absolute;left:1248.3px;top:559.4px" width="9.6" height="5.4" viewBox="0 0 9.6 5.4" fill="none" stroke="#a0a0a4" stroke-width="1.5" stroke-linecap="round" stroke-linejoin="round"><path d="M0.75 0.75 L4.8 4.65 L8.85 0.75"/></svg>
<svg style="position:absolute;left:1313.2px;top:553.5px;" width="15.5" height="15.5" viewBox="0 0 24 24" fill="none" stroke="#97979b" stroke-width="1.9" stroke-linecap="round" stroke-linejoin="round"><path d="M10.733 5.076a10.744 10.744 0 0 1 11.205 6.575 1 1 0 0 1 0 .696 10.747 10.747 0 0 1-1.444 2.49"/><path d="M14.084 14.158a3 3 0 0 1-4.242-4.242"/><path d="M17.479 17.499a10.75 10.75 0 0 1-15.417-5.151 1 1 0 0 1 0-.696 10.75 10.75 0 0 1 4.446-5.143"/><path d="m2 2 20 20"/></svg>
<svg style="position:absolute;left:1359px;top:555.2px;" width="14" height="14" viewBox="0 0 24 24" fill="none" stroke="#e0283c" stroke-width="2" stroke-linecap="round" stroke-linejoin="round"><circle cx="12" cy="12" r="10"/><line x1="12" x2="12" y1="8" y2="12"/><line x1="12" x2="12.01" y1="16" y2="16"/></svg>
<div style="position:absolute;left:1399.7px;top:559.7px;width:3.1px;height:3.1px;box-sizing:border-box;background:#fff;border-radius:50%;"></div>
<div style="position:absolute;left:1404.45px;top:559.7px;width:3.1px;height:3.1px;box-sizing:border-box;background:#fff;border-radius:50%;"></div>
<div style="position:absolute;left:1409.2px;top:559.7px;width:3.1px;height:3.1px;box-sizing:border-box;background:#fff;border-radius:50%;"></div>
<div style="position:absolute;left:172px;top:609.9px;width:14px;height:14px;box-sizing:border-box;border:1px solid #4d4b50;border-radius:3px;"></div>
<svg style="position:absolute;left:207px;top:610.25px" width="10" height="14" viewBox="0 0 10 14" fill="none" stroke="#f2f2f2" stroke-width="1.6" stroke-linecap="round" stroke-linejoin="round"><path d="M2.6 2.6 L7.4 7 L2.6 11.4"/></svg>
<div style="position:absolute;left:236px;top:605.5px;width:65px;height:24px;box-sizing:border-box;background:#f96e12;border-radius:5px;"></div>
<div style="position:absolute;left:246.3px;top:612.45px;font-family:'Liberation Sans', sans-serif;font-size:10px;line-height:11.17px;color:#fff;font-weight:700;letter-spacing:-0.5px;white-space:nowrap;">HIGH</div>
<svg style="position:absolute;left:278.5px;top:614.9px" width="9.5" height="5.2" viewBox="0 0 9.5 5.2" fill="none" stroke="#fff" stroke-width="1.6" stroke-linecap="round" stroke-linejoin="round"><path d="M0.8 0.8 L4.75 4.4 L8.7 0.8"/></svg>
<div style="position:absolute;left:326.5px;top:596.79px;font-family:'Liberation Sans', sans-serif;font-size:12.5px;line-height:13.96px;color:#ebe7e9;font-weight:400;letter-spacing:0.102px;white-space:nowrap;-webkit-text-stroke:0.2px currentColor;">Broken Access Control: Unauthenticated Access</div>
<div style="position:absolute;left:326.5px;top:612.79px;font-family:'Liberation Sans', sans-serif;font-size:12.5px;line-height:13.96px;color:#ebe7e9;font-weight:400;letter-spacing:0.107px;white-space:nowrap;-webkit-text-stroke:0.2px currentColor;">to Project Screenshots</div>
<div style="position:absolute;left:326.4px;top:629.07px;font-family:'Liberation Mono', monospace;font-size:10px;line-height:11.33px;color:#8d8a8c;font-weight:400;letter-spacing:-0.073px;white-space:nowrap;-webkit-text-stroke:0.2px currentColor;">REDT-002-032</div>
<div style="position:absolute;left:633px;top:605.5px;width:85px;height:24px;box-sizing:border-box;background:#8a91f4;border-radius:6px;"></div>
<div style="position:absolute;left:643.4px;top:612.35px;font-family:'Liberation Sans', sans-serif;font-size:10px;line-height:11.17px;color:#fafaff;font-weight:400;letter-spacing:-0.071px;white-space:nowrap;-webkit-text-stroke:0.2px currentColor;">Needs Re</div>
<svg style="position:absolute;left:695.5px;top:614.9px" width="9.5" height="5.4" viewBox="0 0 9.5 5.4" fill="none" stroke="#fff" stroke-width="1.45" stroke-linecap="round" stroke-linejoin="round"><path d="M0.725 0.725 L4.75 4.675000000000001 L8.775 0.725"/></svg>
<div style="position:absolute;left:734px;top:605.5px;width:94px;height:24px;box-sizing:border-box;background:#24b958;border-radius:6px;"></div>
<div style="position:absolute;left:744.5px;top:612.35px;font-family:'Liberation Sans', sans-serif;font-size:10px;line-height:11.17px;color:#fff;font-weight:400;letter-spacing:-0.15px;white-space:nowrap;-webkit-text-stroke:0.2px currentColor;">Fixed</div>
<svg style="position:absolute;left:805.5px;top:614.9px" width="9.5" height="5.4" viewBox="0 0 9.5 5.4" fill="none" stroke="#fff" stroke-width="1.45" stroke-linecap="round" stroke-linejoin="round"><path d="M0.725 0.725 L4.75 4.675000000000001 L8.775 0.725"/></svg>
<div style="position:absolute;left:850px;top:609.0px;width:32px;height:20px;box-sizing:border-box;background:#f96e12;border-radius:5px;"></div>
<div style="position:absolute;left:857px;top:614.15px;font-family:'Liberation Mono', monospace;font-size:10.5px;line-height:11.90px;color:#fff;font-weight:700;letter-spacing:-0.6px;white-space:nowrap;">7.5</div>
<div style="position:absolute;left:909.6px;top:612.35px;font-family:'Liberation Sans', sans-serif;font-size:10px;line-height:11.17px;color:#9a989b;font-weight:400;letter-spacing:0.2px;white-space:nowrap;-webkit-text-stroke:0.2px currentColor;">1</div>
<svg style="position:absolute;left:920.8px;top:611.7px" width="12.2" height="11.6" viewBox="0 0 12.2 11.6"><rect x="1" y="1" width="10.2" height="9.6" rx="3" fill="none" stroke="#6b6b6f" stroke-width="2"/><rect x="1" y="4.4" width="10.2" height="2.8" fill="#6b6b6f"/></svg>
<div style="position:absolute;left:938.3px;top:612.35px;font-family:'Liberation Sans', sans-serif;font-size:10px;line-height:11.17px;color:#9a989b;font-weight:400;letter-spacing:0.2px;white-space:nowrap;-webkit-text-stroke:0.2px currentColor;">1</div>
<svg style="position:absolute;left:949.4px;top:611.7px;" width="11.5" height="11.5" viewBox="0 0 24 24" fill="none" stroke="#9a989b" stroke-width="2" stroke-linecap="round" stroke-linejoin="round"><path d="M20 10c0 4.993-5.539 10.193-7.399 11.799a1 1 0 0 1-1.202 0C9.539 20.193 4 14.993 4 10a8 8 0 0 1 16 0"/><circle cx="12" cy="10" r="3"/></svg>
<svg style="position:absolute;left:989.6px;top:611.1px;" width="12.5" height="12.5" viewBox="0 0 24 24" fill="none" stroke="#9a989b" stroke-width="1.9" stroke-linecap="round" stroke-linejoin="round"><path d="M21 15a2 2 0 0 1-2 2H7l-4 4V5a2 2 0 0 1 2-2h14a2 2 0 0 1 2 2z"/></svg>
<div style="position:absolute;left:1006px;top:612.35px;font-family:'Liberation Sans', sans-serif;font-size:10px;line-height:11.17px;color:#9a989b;font-weight:400;letter-spacing:0.2px;white-space:nowrap;-webkit-text-stroke:0.2px currentColor;">9</div>
<div style="position:absolute;left:1045px;top:607.9px;width:18px;height:18px;border-radius:50%;overflow:hidden"><div style="position:absolute;left:0;top:0;width:18px;height:18px;background:linear-gradient(#c8d4e0 0%, #dcd8d4 55%, #d8c0ac 72%, #b0a090 100%)"></div><div style="position:absolute;left:5.6px;top:3.4px;width:7px;height:9px;border-radius:50% 50% 45% 45%;background:linear-gradient(#a88a7a, #8a6a5c 50%, #4e3e3a 100%)"></div><div style="position:absolute;left:1px;top:11.6px;width:16px;height:10px;border-radius:45% 45% 0 0;background:#565962"></div></div>
<svg style="position:absolute;left:1069px;top:614.5px" width="10" height="5.6" viewBox="0 0 10 5.6" fill="none" stroke="#a0a0a4" stroke-width="1.5" stroke-linecap="round" stroke-linejoin="round"><path d="M0.75 0.75 L5.0 4.85 L9.25 0.75"/></svg>
<div style="position:absolute;left:1135px;top:607.9px;width:18px;height:18px;border-radius:50%;overflow:hidden"><div style="position:absolute;left:0;top:0;width:18px;height:18px;background:linear-gradient(#c8d4e0 0%, #dcd8d4 55%, #d8c0ac 72%, #b0a090 100%)"></div><div style="position:absolute;left:5.6px;top:3.4px;width:7px;height:9px;border-radius:50% 50% 45% 45%;background:linear-gradient(#a88a7a, #8a6a5c 50%, #4e3e3a 100%)"></div><div style="position:absolute;left:1px;top:11.6px;width:16px;height:10px;border-radius:45% 45% 0 0;background:#565962"></div></div>
<svg style="position:absolute;left:1159.8px;top:614.9px" width="9.6" height="5.4" viewBox="0 0 9.6 5.4" fill="none" stroke="#a0a0a4" stroke-width="1.5" stroke-linecap="round" stroke-linejoin="round"><path d="M0.75 0.75 L4.8 4.65 L8.85 0.75"/></svg>
<div style="position:absolute;left:1225px;top:608.1px;width:18px;height:18px;box-sizing:border-box;border-radius:50%;background:#3d1f28;"></div>
<div style="position:absolute;left:1229.6px;top:613.96px;font-family:'Liberation Sans', sans-serif;font-size:8px;line-height:8.94px;color:#f0e8ea;font-weight:700;letter-spacing:-0.3px;white-space:nowrap;">C1</div>
<svg style="position:absolute;left:1250px;top:614.9px" width="9.6" height="5.4" viewBox="0 0 9.6 5.4" fill="none" stroke="#a0a0a4" stroke-width="1.5" stroke-linecap="round" stroke-linejoin="round"><path d="M0.75 0.75 L4.8 4.65 L8.85 0.75"/></svg>
<svg style="position:absolute;left:1313.2px;top:609.0px;" width="15.5" height="15.5" viewBox="0 0 24 24" fill="none" stroke="#97979b" stroke-width="1.9" stroke-linecap="round" stroke-linejoin="round"><path d="M10.733 5.076a10.744 10.744 0 0 1 11.205 6.575 1 1 0 0 1 0 .696 10.747 10.747 0 0 1-1.444 2.49"/><path d="M14.084 14.158a3 3 0 0 1-4.242-4.242"/><path d="M17.479 17.499a10.75 10.75 0 0 1-15.417-5.151 1 1 0 0 1 0-.696 10.75 10.75 0 0 1 4.446-5.143"/><path d="m2 2 20 20"/></svg>
<svg style="position:absolute;left:1359px;top:610.7px;" width="14" height="14" viewBox="0 0 24 24" fill="none" stroke="#e0283c" stroke-width="2" stroke-linecap="round" stroke-linejoin="round"><circle cx="12" cy="12" r="10"/><line x1="12" x2="12" y1="8" y2="12"/><line x1="12" x2="12.01" y1="16" y2="16"/></svg>
<div style="position:absolute;left:1399.7px;top:615.2px;width:3.1px;height:3.1px;box-sizing:border-box;background:#fff;border-radius:50%;"></div>
<div style="position:absolute;left:1404.45px;top:615.2px;width:3.1px;height:3.1px;box-sizing:border-box;background:#fff;border-radius:50%;"></div>
<div style="position:absolute;left:1409.2px;top:615.2px;width:3.1px;height:3.1px;box-sizing:border-box;background:#fff;border-radius:50%;"></div>
<div style="position:absolute;left:172px;top:657.4px;width:14px;height:14px;box-sizing:border-box;border:1px solid #4d4b50;border-radius:3px;"></div>
<svg style="position:absolute;left:207px;top:657.75px" width="10" height="14" viewBox="0 0 10 14" fill="none" stroke="#f2f2f2" stroke-width="1.6" stroke-linecap="round" stroke-linejoin="round"><path d="M2.6 2.6 L7.4 7 L2.6 11.4"/></svg>
<div style="position:absolute;left:236px;top:653.0px;width:65px;height:24px;box-sizing:border-box;background:#ecae2d;border-radius:5px;"></div>
<div style="position:absolute;left:246.3px;top:659.95px;font-family:'Liberation Sans', sans-serif;font-size:10px;line-height:11.17px;color:#1a1208;font-weight:700;letter-spacing:-0.2px;white-space:nowrap;">MEDI</div>
<svg style="position:absolute;left:278.5px;top:662.4px" width="9.5" height="5.2" viewBox="0 0 9.5 5.2" fill="none" stroke="#1a1208" stroke-width="1.6" stroke-linecap="round" stroke-linejoin="round"><path d="M0.8 0.8 L4.75 4.4 L8.7 0.8"/></svg>
<div style="position:absolute;left:326.5px;top:652.29px;font-family:'Liberation Sans', sans-serif;font-size:12.5px;line-height:13.96px;color:#ebe7e9;font-weight:400;letter-spacing:0.75px;white-space:nowrap;-webkit-text-stroke:0.2px currentColor;">test</div>
<div style="position:absolute;left:326.4px;top:667.57px;font-family:'Liberation Mono', monospace;font-size:10px;line-height:11.33px;color:#8d8a8c;font-weight:400;letter-spacing:-0.073px;white-space:nowrap;-webkit-text-stroke:0.2px currentColor;">REDT-002-176</div>
<div style="position:absolute;left:633px;top:653.0px;width:85px;height:24px;box-sizing:border-box;background:#161418;border-radius:6px;"></div>
<div style="position:absolute;left:643.3px;top:659.85px;font-family:'Liberation Sans', sans-serif;font-size:10px;line-height:11.17px;color:#8e8c8e;font-weight:400;letter-spacing:0.362px;white-space:nowrap;-webkit-text-stroke:0.2px currentColor;">Draft</div>
<svg style="position:absolute;left:695.5px;top:662.4px" width="9.5" height="5.4" viewBox="0 0 9.5 5.4" fill="none" stroke="#8e8c8e" stroke-width="1.6" stroke-linecap="round" stroke-linejoin="round"><path d="M0.8 0.8 L4.75 4.6000000000000005 L8.7 0.8"/></svg>
<div style="position:absolute;left:734px;top:653.0px;width:94px;height:24px;box-sizing:border-box;background:#b049fd;border-radius:6px;"></div>
<div style="position:absolute;left:744.5px;top:659.85px;font-family:'Liberation Sans', sans-serif;font-size:10px;line-height:11.17px;color:#fff;font-weight:400;letter-spacing:-0.114px;white-space:nowrap;-webkit-text-stroke:0.2px currentColor;">False Po</div>
<svg style="position:absolute;left:805.5px;top:662.4px" width="9.5" height="5.4" viewBox="0 0 9.5 5.4" fill="none" stroke="#fff" stroke-width="1.45" stroke-linecap="round" stroke-linejoin="round"><path d="M0.725 0.725 L4.75 4.675000000000001 L8.775 0.725"/></svg>
<div style="position:absolute;left:862px;top:666.0px;width:8px;height:1.2px;box-sizing:border-box;background:#6c6a6d;"></div>
<div style="position:absolute;left:910px;top:659.85px;font-family:'Liberation Sans', sans-serif;font-size:10px;line-height:11.17px;color:#9a989b;font-weight:400;letter-spacing:0.2px;white-space:nowrap;-webkit-text-stroke:0.2px currentColor;">0</div>
<svg style="position:absolute;left:921.8px;top:659.2px" width="12.2" height="11.6" viewBox="0 0 12.2 11.6"><rect x="1" y="1" width="10.2" height="9.6" rx="3" fill="none" stroke="#6b6b6f" stroke-width="2"/><rect x="1" y="4.4" width="10.2" height="2.8" fill="#6b6b6f"/></svg>
<div style="position:absolute;left:940.5px;top:659.85px;font-family:'Liberation Sans', sans-serif;font-size:10px;line-height:11.17px;color:#9a989b;font-weight:400;letter-spacing:0.2px;white-space:nowrap;-webkit-text-stroke:0.2px currentColor;">1</div>
<svg style="position:absolute;left:950.5px;top:659.2px;" width="11.5" height="11.5" viewBox="0 0 24 24" fill="none" stroke="#9a989b" stroke-width="2" stroke-linecap="round" stroke-linejoin="round"><path d="M20 10c0 4.993-5.539 10.193-7.399 11.799a1 1 0 0 1-1.202 0C9.539 20.193 4 14.993 4 10a8 8 0 0 1 16 0"/><circle cx="12" cy="10" r="3"/></svg>
<svg style="position:absolute;left:989.6px;top:658.6px;" width="12.5" height="12.5" viewBox="0 0 24 24" fill="none" stroke="#9a989b" stroke-width="1.9" stroke-linecap="round" stroke-linejoin="round"><path d="M21 15a2 2 0 0 1-2 2H7l-4 4V5a2 2 0 0 1 2-2h14a2 2 0 0 1 2 2z"/></svg>
<div style="position:absolute;left:1006px;top:659.85px;font-family:'Liberation Sans', sans-serif;font-size:10px;line-height:11.17px;color:#9a989b;font-weight:400;letter-spacing:0.2px;white-space:nowrap;-webkit-text-stroke:0.2px currentColor;">0</div>
<div style="position:absolute;left:1045px;top:655.4px;width:18px;height:18px;border-radius:50%;overflow:hidden"><div style="position:absolute;left:0;top:0;width:18px;height:18px;background:linear-gradient(90deg, #6a5040 0%, #c0a490 35%, #d0b4a0 65%, #8a6a58 100%)"></div><div style="position:absolute;left:6.6px;top:2.6px;width:4.4px;height:5px;background:#9a7060;border-radius:50%"></div><div style="position:absolute;left:5px;top:7px;width:8px;height:12px;background:#2e2628;border-radius:35% 35% 0 0"></div><div style="position:absolute;left:6.5px;top:9.5px;width:4px;height:2px;background:#c07050;"></div></div>
<svg style="position:absolute;left:1069px;top:662.0px" width="10" height="5.6" viewBox="0 0 10 5.6" fill="none" stroke="#a0a0a4" stroke-width="1.5" stroke-linecap="round" stroke-linejoin="round"><path d="M0.75 0.75 L5.0 4.85 L9.25 0.75"/></svg>
<div style="position:absolute;left:1134.3px;top:659.85px;font-family:'Liberation Sans', sans-serif;font-size:10px;line-height:11.17px;color:#a2a2a6;font-weight:400;letter-spacing:0.125px;white-space:nowrap;-webkit-text-stroke:0.2px currentColor;">Add</div>
<svg style="position:absolute;left:1158.4px;top:662.4px" width="9.6" height="5.4" viewBox="0 0 9.6 5.4" fill="none" stroke="#a0a0a4" stroke-width="1.5" stroke-linecap="round" stroke-linejoin="round"><path d="M0.75 0.75 L4.8 4.65 L8.85 0.75"/></svg>
<div style="position:absolute;left:1224.2px;top:659.85px;font-family:'Liberation Sans', sans-serif;font-size:10px;line-height:11.17px;color:#a2a2a6;font-weight:400;letter-spacing:0.325px;white-space:nowrap;-webkit-text-stroke:0.2px currentColor;">Add</div>
<svg style="position:absolute;left:1248.3px;top:662.4px" width="9.6" height="5.4" viewBox="0 0 9.6 5.4" fill="none" stroke="#a0a0a4" stroke-width="1.5" stroke-linecap="round" stroke-linejoin="round"><path d="M0.75 0.75 L4.8 4.65 L8.85 0.75"/></svg>
<svg style="position:absolute;left:1313.2px;top:656.5px;" width="15.5" height="15.5" viewBox="0 0 24 24" fill="none" stroke="#97979b" stroke-width="1.9" stroke-linecap="round" stroke-linejoin="round"><path d="M10.733 5.076a10.744 10.744 0 0 1 11.205 6.575 1 1 0 0 1 0 .696 10.747 10.747 0 0 1-1.444 2.49"/><path d="M14.084 14.158a3 3 0 0 1-4.242-4.242"/><path d="M17.479 17.499a10.75 10.75 0 0 1-15.417-5.151 1 1 0 0 1 0-.696 10.75 10.75 0 0 1 4.446-5.143"/><path d="m2 2 20 20"/></svg>
<svg style="position:absolute;left:1359px;top:658.2px;" width="14" height="14" viewBox="0 0 24 24" fill="none" stroke="#e0283c" stroke-width="2" stroke-linecap="round" stroke-linejoin="round"><circle cx="12" cy="12" r="10"/><line x1="12" x2="12" y1="8" y2="12"/><line x1="12" x2="12.01" y1="16" y2="16"/></svg>
<div style="position:absolute;left:1399.7px;top:662.7px;width:3.1px;height:3.1px;box-sizing:border-box;background:#fff;border-radius:50%;"></div>
<div style="position:absolute;left:1404.45px;top:662.7px;width:3.1px;height:3.1px;box-sizing:border-box;background:#fff;border-radius:50%;"></div>
<div style="position:absolute;left:1409.2px;top:662.7px;width:3.1px;height:3.1px;box-sizing:border-box;background:#fff;border-radius:50%;"></div>
</div></body></html>
